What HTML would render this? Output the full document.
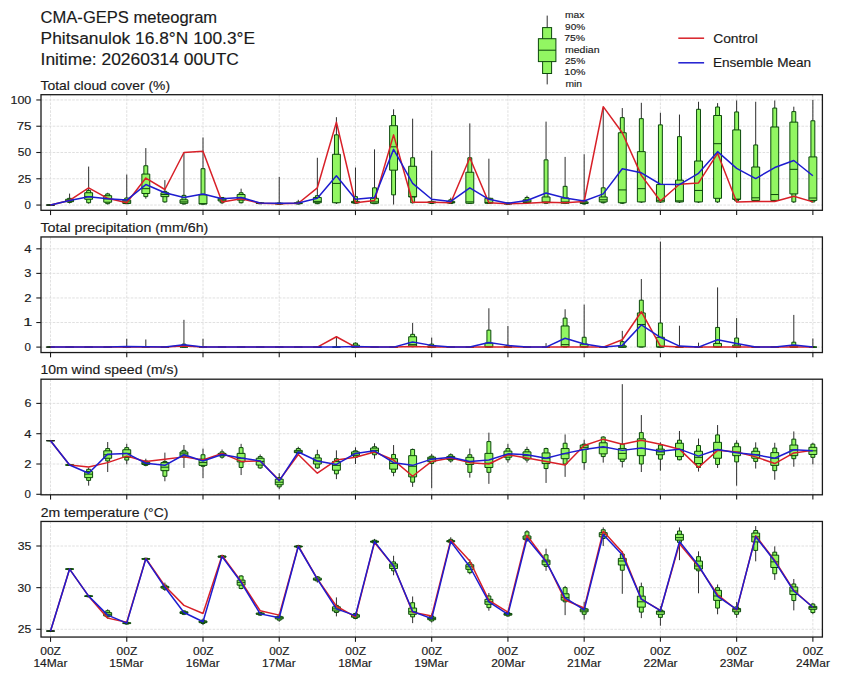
<!DOCTYPE html>
<html><head><meta charset="utf-8"><style>
html,body{margin:0;padding:0;background:#fff;width:841px;height:680px;overflow:hidden}
svg{display:block;font-family:"Liberation Sans", sans-serif;fill:#1a1a1a}
text{stroke:#1a1a1a;stroke-width:0.15px}
</style></head><body>
<svg width="841" height="680" viewBox="0 0 841 680">
<rect width="841" height="680" fill="#fff"/>
<text x="40.62" y="23.00" font-size="16.04" textLength="176.50" lengthAdjust="spacingAndGlyphs">CMA-GEPS meteogram</text>
<text x="40.61" y="43.70" font-size="16.04" textLength="214.43" lengthAdjust="spacingAndGlyphs">Phitsanulok 16.8°N 100.3°E</text>
<text x="40.56" y="64.60" font-size="16.04" textLength="198.34" lengthAdjust="spacingAndGlyphs">Initime: 20260314 00UTC</text>
<line x1="547.2" y1="15.6" x2="547.2" y2="84.4" stroke="#2e2e2e" stroke-width="1"/>
<rect x="542.6" y="27.6" width="9.0" height="45.9" fill="#92f662" stroke="#0c480c" stroke-width="1"/>
<rect x="538.4" y="38.7" width="17.5" height="22.9" fill="#92f662" stroke="#0c480c" stroke-width="1"/>
<line x1="538.4" y1="50.2" x2="555.9" y2="50.2" stroke="#0c480c" stroke-width="1"/>
<text x="565.08" y="18.30" font-size="9.45" textLength="19.38" lengthAdjust="spacingAndGlyphs">max</text>
<text x="565.13" y="29.71" font-size="9.45" textLength="20.08" lengthAdjust="spacingAndGlyphs">90%</text>
<text x="564.18" y="41.12" font-size="9.45" textLength="20.91" lengthAdjust="spacingAndGlyphs">75%</text>
<text x="564.98" y="52.53" font-size="9.45" textLength="34.52" lengthAdjust="spacingAndGlyphs">median</text>
<text x="564.98" y="63.94" font-size="9.45" textLength="20.27" lengthAdjust="spacingAndGlyphs">25%</text>
<text x="564.27" y="75.35" font-size="9.45" textLength="21.21" lengthAdjust="spacingAndGlyphs">10%</text>
<text x="565.45" y="86.76" font-size="9.45" textLength="16.58" lengthAdjust="spacingAndGlyphs">min</text>
<line x1="678.3" y1="38.2" x2="704.1" y2="38.2" stroke="#d82028" stroke-width="1.5"/>
<line x1="678.3" y1="62.8" x2="704.1" y2="62.8" stroke="#1e1cd0" stroke-width="1.5"/>
<text x="713.17" y="42.60" font-size="12.81" textLength="44.67" lengthAdjust="spacingAndGlyphs">Control</text>
<text x="712.93" y="66.90" font-size="12.81" textLength="98.22" lengthAdjust="spacingAndGlyphs">Ensemble Mean</text>
<text x="40.49" y="89.80" font-size="12.81" textLength="129.56" lengthAdjust="spacingAndGlyphs">Total cloud cover (%)</text>
<line x1="50.53" y1="94.70" x2="50.53" y2="210.30" stroke="#d8d8d8" stroke-width="0.8" stroke-dasharray="2.6,1.3"/>
<line x1="126.76" y1="94.70" x2="126.76" y2="210.30" stroke="#d8d8d8" stroke-width="0.8" stroke-dasharray="2.6,1.3"/>
<line x1="203.00" y1="94.70" x2="203.00" y2="210.30" stroke="#d8d8d8" stroke-width="0.8" stroke-dasharray="2.6,1.3"/>
<line x1="279.23" y1="94.70" x2="279.23" y2="210.30" stroke="#d8d8d8" stroke-width="0.8" stroke-dasharray="2.6,1.3"/>
<line x1="355.47" y1="94.70" x2="355.47" y2="210.30" stroke="#d8d8d8" stroke-width="0.8" stroke-dasharray="2.6,1.3"/>
<line x1="431.70" y1="94.70" x2="431.70" y2="210.30" stroke="#d8d8d8" stroke-width="0.8" stroke-dasharray="2.6,1.3"/>
<line x1="507.93" y1="94.70" x2="507.93" y2="210.30" stroke="#d8d8d8" stroke-width="0.8" stroke-dasharray="2.6,1.3"/>
<line x1="584.17" y1="94.70" x2="584.17" y2="210.30" stroke="#d8d8d8" stroke-width="0.8" stroke-dasharray="2.6,1.3"/>
<line x1="660.40" y1="94.70" x2="660.40" y2="210.30" stroke="#d8d8d8" stroke-width="0.8" stroke-dasharray="2.6,1.3"/>
<line x1="736.64" y1="94.70" x2="736.64" y2="210.30" stroke="#d8d8d8" stroke-width="0.8" stroke-dasharray="2.6,1.3"/>
<line x1="812.87" y1="94.70" x2="812.87" y2="210.30" stroke="#d8d8d8" stroke-width="0.8" stroke-dasharray="2.6,1.3"/>
<line x1="41.00" y1="205.05" x2="822.40" y2="205.05" stroke="#d8d8d8" stroke-width="0.8" stroke-dasharray="2.6,1.3"/>
<line x1="41.00" y1="178.78" x2="822.40" y2="178.78" stroke="#d8d8d8" stroke-width="0.8" stroke-dasharray="2.6,1.3"/>
<line x1="41.00" y1="152.50" x2="822.40" y2="152.50" stroke="#d8d8d8" stroke-width="0.8" stroke-dasharray="2.6,1.3"/>
<line x1="41.00" y1="126.23" x2="822.40" y2="126.23" stroke="#d8d8d8" stroke-width="0.8" stroke-dasharray="2.6,1.3"/>
<line x1="41.00" y1="99.96" x2="822.40" y2="99.96" stroke="#d8d8d8" stroke-width="0.8" stroke-dasharray="2.6,1.3"/>
<line x1="50.53" y1="205.05" x2="50.53" y2="205.05" stroke="#2e2e2e" stroke-width="1"/>
<path d="M48.58 205.05H52.48V205.05H48.58Z" fill="#92f662" stroke="#0c480c" stroke-width="1.0"/>
<path d="M46.58 205.05H54.48V205.05H46.58Z" fill="#92f662" stroke="#0c480c" stroke-width="1.0"/>
<line x1="46.58" y1="205.05" x2="54.48" y2="205.05" stroke="#0c480c" stroke-width="1.0"/>
<line x1="46.28" y1="205.05" x2="54.78" y2="205.05" stroke="#222" stroke-width="1.1"/>
<line x1="69.59" y1="193.60" x2="69.59" y2="203.47" stroke="#2e2e2e" stroke-width="1"/>
<path d="M67.64 198.32H71.54V202.42H67.64Z" fill="#92f662" stroke="#0c480c" stroke-width="1.0"/>
<path d="M65.64 199.27H73.54V201.69H65.64Z" fill="#92f662" stroke="#0c480c" stroke-width="1.0"/>
<line x1="65.64" y1="200.85" x2="73.54" y2="200.85" stroke="#0c480c" stroke-width="1.0"/>
<line x1="88.65" y1="166.59" x2="88.65" y2="203.68" stroke="#2e2e2e" stroke-width="1"/>
<path d="M86.70 190.44H90.60V202.74H86.70Z" fill="#92f662" stroke="#0c480c" stroke-width="1.0"/>
<path d="M84.70 192.75H92.60V199.27H84.70Z" fill="#92f662" stroke="#0c480c" stroke-width="1.0"/>
<line x1="84.70" y1="196.64" x2="92.60" y2="196.64" stroke="#0c480c" stroke-width="1.0"/>
<line x1="107.70" y1="192.75" x2="107.70" y2="204.52" stroke="#2e2e2e" stroke-width="1"/>
<path d="M105.75 193.91H109.65V203.68H105.75Z" fill="#92f662" stroke="#0c480c" stroke-width="1.0"/>
<path d="M103.75 195.70H111.65V202.21H103.75Z" fill="#92f662" stroke="#0c480c" stroke-width="1.0"/>
<line x1="103.75" y1="198.85" x2="111.65" y2="198.85" stroke="#0c480c" stroke-width="1.0"/>
<line x1="126.76" y1="174.57" x2="126.76" y2="204.00" stroke="#2e2e2e" stroke-width="1"/>
<path d="M124.81 198.01H128.71V203.68H124.81Z" fill="#92f662" stroke="#0c480c" stroke-width="1.0"/>
<path d="M122.81 200.11H130.71V203.47H122.81Z" fill="#92f662" stroke="#0c480c" stroke-width="1.0"/>
<line x1="122.81" y1="201.90" x2="130.71" y2="201.90" stroke="#0c480c" stroke-width="1.0"/>
<line x1="145.82" y1="148.09" x2="145.82" y2="198.74" stroke="#2e2e2e" stroke-width="1"/>
<path d="M143.87 165.75H147.77V196.64H143.87Z" fill="#92f662" stroke="#0c480c" stroke-width="1.0"/>
<path d="M141.87 174.05H149.77V193.49H141.87Z" fill="#92f662" stroke="#0c480c" stroke-width="1.0"/>
<line x1="141.87" y1="188.66" x2="149.77" y2="188.66" stroke="#0c480c" stroke-width="1.0"/>
<line x1="164.88" y1="180.14" x2="164.88" y2="202.74" stroke="#2e2e2e" stroke-width="1"/>
<path d="M162.93 191.39H166.83V201.90H162.93Z" fill="#92f662" stroke="#0c480c" stroke-width="1.0"/>
<path d="M160.93 192.75H168.83V196.64H160.93Z" fill="#92f662" stroke="#0c480c" stroke-width="1.0"/>
<line x1="160.93" y1="194.54" x2="168.83" y2="194.54" stroke="#0c480c" stroke-width="1.0"/>
<line x1="183.94" y1="152.50" x2="183.94" y2="204.52" stroke="#2e2e2e" stroke-width="1"/>
<path d="M181.99 195.38H185.89V204.00H181.99Z" fill="#92f662" stroke="#0c480c" stroke-width="1.0"/>
<path d="M179.99 199.80H187.89V203.26H179.99Z" fill="#92f662" stroke="#0c480c" stroke-width="1.0"/>
<line x1="179.99" y1="201.90" x2="187.89" y2="201.90" stroke="#0c480c" stroke-width="1.0"/>
<line x1="203.00" y1="137.48" x2="203.00" y2="204.52" stroke="#2e2e2e" stroke-width="1"/>
<path d="M201.05 168.69H204.95V204.00H201.05Z" fill="#92f662" stroke="#0c480c" stroke-width="1.0"/>
<path d="M199.05 194.86H206.95V204.00H199.05Z" fill="#92f662" stroke="#0c480c" stroke-width="1.0"/>
<line x1="199.05" y1="203.68" x2="206.95" y2="203.68" stroke="#0c480c" stroke-width="1.0"/>
<line x1="222.06" y1="197.17" x2="222.06" y2="204.00" stroke="#2e2e2e" stroke-width="1"/>
<path d="M220.11 197.48H224.01V202.74H220.11Z" fill="#92f662" stroke="#0c480c" stroke-width="1.0"/>
<path d="M218.11 198.32H226.01V200.95H218.11Z" fill="#92f662" stroke="#0c480c" stroke-width="1.0"/>
<line x1="218.11" y1="199.80" x2="226.01" y2="199.80" stroke="#0c480c" stroke-width="1.0"/>
<line x1="241.11" y1="188.66" x2="241.11" y2="203.47" stroke="#2e2e2e" stroke-width="1"/>
<path d="M239.16 192.75H243.06V202.74H239.16Z" fill="#92f662" stroke="#0c480c" stroke-width="1.0"/>
<path d="M237.16 194.54H245.06V200.11H237.16Z" fill="#92f662" stroke="#0c480c" stroke-width="1.0"/>
<line x1="237.16" y1="198.01" x2="245.06" y2="198.01" stroke="#0c480c" stroke-width="1.0"/>
<line x1="260.17" y1="202.32" x2="260.17" y2="204.00" stroke="#2e2e2e" stroke-width="1"/>
<path d="M258.22 202.63H262.12V203.79H258.22Z" fill="#92f662" stroke="#0c480c" stroke-width="1.0"/>
<path d="M256.22 202.95H264.12V203.47H256.22Z" fill="#92f662" stroke="#0c480c" stroke-width="1.0"/>
<line x1="256.22" y1="203.26" x2="264.12" y2="203.26" stroke="#0c480c" stroke-width="1.0"/>
<line x1="279.23" y1="176.89" x2="279.23" y2="204.52" stroke="#2e2e2e" stroke-width="1"/>
<path d="M277.28 202.95H281.18V204.21H277.28Z" fill="#92f662" stroke="#0c480c" stroke-width="1.0"/>
<path d="M275.28 203.26H283.18V204.00H275.28Z" fill="#92f662" stroke="#0c480c" stroke-width="1.0"/>
<line x1="275.28" y1="203.68" x2="283.18" y2="203.68" stroke="#0c480c" stroke-width="1.0"/>
<line x1="298.29" y1="199.80" x2="298.29" y2="204.52" stroke="#2e2e2e" stroke-width="1"/>
<path d="M296.34 201.90H300.24V204.00H296.34Z" fill="#92f662" stroke="#0c480c" stroke-width="1.0"/>
<path d="M294.34 202.74H302.24V203.68H294.34Z" fill="#92f662" stroke="#0c480c" stroke-width="1.0"/>
<line x1="294.34" y1="203.26" x2="302.24" y2="203.26" stroke="#0c480c" stroke-width="1.0"/>
<line x1="317.35" y1="157.76" x2="317.35" y2="204.21" stroke="#2e2e2e" stroke-width="1"/>
<path d="M315.40 195.70H319.30V203.68H315.40Z" fill="#92f662" stroke="#0c480c" stroke-width="1.0"/>
<path d="M313.40 197.48H321.30V202.74H313.40Z" fill="#92f662" stroke="#0c480c" stroke-width="1.0"/>
<line x1="313.40" y1="201.37" x2="321.30" y2="201.37" stroke="#0c480c" stroke-width="1.0"/>
<line x1="336.41" y1="117.19" x2="336.41" y2="204.00" stroke="#2e2e2e" stroke-width="1"/>
<path d="M334.46 134.85H338.36V202.74H334.46Z" fill="#92f662" stroke="#0c480c" stroke-width="1.0"/>
<path d="M332.46 154.29H340.36V202.74H332.46Z" fill="#92f662" stroke="#0c480c" stroke-width="1.0"/>
<line x1="332.46" y1="183.40" x2="340.36" y2="183.40" stroke="#0c480c" stroke-width="1.0"/>
<line x1="355.47" y1="167.53" x2="355.47" y2="204.00" stroke="#2e2e2e" stroke-width="1"/>
<path d="M353.52 196.64H357.42V203.26H353.52Z" fill="#92f662" stroke="#0c480c" stroke-width="1.0"/>
<path d="M351.52 201.37H359.42V202.95H351.52Z" fill="#92f662" stroke="#0c480c" stroke-width="1.0"/>
<line x1="351.52" y1="202.42" x2="359.42" y2="202.42" stroke="#0c480c" stroke-width="1.0"/>
<line x1="374.52" y1="149.35" x2="374.52" y2="204.00" stroke="#2e2e2e" stroke-width="1"/>
<path d="M372.57 187.82H376.47V203.68H372.57Z" fill="#92f662" stroke="#0c480c" stroke-width="1.0"/>
<path d="M370.57 198.32H378.47V203.26H370.57Z" fill="#92f662" stroke="#0c480c" stroke-width="1.0"/>
<line x1="370.57" y1="201.90" x2="378.47" y2="201.90" stroke="#0c480c" stroke-width="1.0"/>
<line x1="393.58" y1="109.31" x2="393.58" y2="204.52" stroke="#2e2e2e" stroke-width="1"/>
<path d="M391.63 115.51H395.53V194.86H391.63Z" fill="#92f662" stroke="#0c480c" stroke-width="1.0"/>
<path d="M389.63 125.71H397.53V170.16H389.63Z" fill="#92f662" stroke="#0c480c" stroke-width="1.0"/>
<line x1="389.63" y1="146.83" x2="397.53" y2="146.83" stroke="#0c480c" stroke-width="1.0"/>
<line x1="412.64" y1="118.67" x2="412.64" y2="203.47" stroke="#2e2e2e" stroke-width="1"/>
<path d="M410.69 157.76H414.59V202.74H410.69Z" fill="#92f662" stroke="#0c480c" stroke-width="1.0"/>
<path d="M408.69 166.27H416.59V196.96H408.69Z" fill="#92f662" stroke="#0c480c" stroke-width="1.0"/>
<line x1="408.69" y1="196.64" x2="416.59" y2="196.64" stroke="#0c480c" stroke-width="1.0"/>
<line x1="431.70" y1="150.72" x2="431.70" y2="204.00" stroke="#2e2e2e" stroke-width="1"/>
<path d="M429.75 201.37H433.65V203.47H429.75Z" fill="#92f662" stroke="#0c480c" stroke-width="1.0"/>
<path d="M427.75 201.90H435.65V202.95H427.75Z" fill="#92f662" stroke="#0c480c" stroke-width="1.0"/>
<line x1="427.75" y1="202.42" x2="435.65" y2="202.42" stroke="#0c480c" stroke-width="1.0"/>
<line x1="450.76" y1="197.69" x2="450.76" y2="204.00" stroke="#2e2e2e" stroke-width="1"/>
<path d="M448.81 199.80H452.71V203.47H448.81Z" fill="#92f662" stroke="#0c480c" stroke-width="1.0"/>
<path d="M446.81 201.37H454.71V202.95H446.81Z" fill="#92f662" stroke="#0c480c" stroke-width="1.0"/>
<line x1="446.81" y1="202.42" x2="454.71" y2="202.42" stroke="#0c480c" stroke-width="1.0"/>
<line x1="469.82" y1="123.39" x2="469.82" y2="204.00" stroke="#2e2e2e" stroke-width="1"/>
<path d="M467.87 157.76H471.77V203.26H467.87Z" fill="#92f662" stroke="#0c480c" stroke-width="1.0"/>
<path d="M465.87 172.26H473.77V203.26H465.87Z" fill="#92f662" stroke="#0c480c" stroke-width="1.0"/>
<line x1="465.87" y1="201.90" x2="473.77" y2="201.90" stroke="#0c480c" stroke-width="1.0"/>
<line x1="488.88" y1="158.70" x2="488.88" y2="204.00" stroke="#2e2e2e" stroke-width="1"/>
<path d="M486.93 198.32H490.83V203.47H486.93Z" fill="#92f662" stroke="#0c480c" stroke-width="1.0"/>
<path d="M484.93 198.32H492.83V203.26H484.93Z" fill="#92f662" stroke="#0c480c" stroke-width="1.0"/>
<line x1="484.93" y1="202.42" x2="492.83" y2="202.42" stroke="#0c480c" stroke-width="1.0"/>
<line x1="507.93" y1="202.42" x2="507.93" y2="204.52" stroke="#2e2e2e" stroke-width="1"/>
<path d="M505.98 202.95H509.88V204.21H505.98Z" fill="#92f662" stroke="#0c480c" stroke-width="1.0"/>
<path d="M503.98 203.26H511.88V204.00H503.98Z" fill="#92f662" stroke="#0c480c" stroke-width="1.0"/>
<line x1="503.98" y1="203.68" x2="511.88" y2="203.68" stroke="#0c480c" stroke-width="1.0"/>
<line x1="526.99" y1="195.70" x2="526.99" y2="204.00" stroke="#2e2e2e" stroke-width="1"/>
<path d="M525.04 197.48H528.94V202.74H525.04Z" fill="#92f662" stroke="#0c480c" stroke-width="1.0"/>
<path d="M523.04 199.80H530.94V202.42H523.04Z" fill="#92f662" stroke="#0c480c" stroke-width="1.0"/>
<line x1="523.04" y1="201.90" x2="530.94" y2="201.90" stroke="#0c480c" stroke-width="1.0"/>
<line x1="546.05" y1="121.61" x2="546.05" y2="203.79" stroke="#2e2e2e" stroke-width="1"/>
<path d="M544.10 159.86H548.00V203.26H544.10Z" fill="#92f662" stroke="#0c480c" stroke-width="1.0"/>
<path d="M542.10 196.96H550.00V202.74H542.10Z" fill="#92f662" stroke="#0c480c" stroke-width="1.0"/>
<line x1="542.10" y1="201.90" x2="550.00" y2="201.90" stroke="#0c480c" stroke-width="1.0"/>
<line x1="565.11" y1="156.92" x2="565.11" y2="203.79" stroke="#2e2e2e" stroke-width="1"/>
<path d="M563.16 186.34H567.06V203.26H563.16Z" fill="#92f662" stroke="#0c480c" stroke-width="1.0"/>
<path d="M561.16 198.01H569.06V203.26H561.16Z" fill="#92f662" stroke="#0c480c" stroke-width="1.0"/>
<line x1="561.16" y1="201.90" x2="569.06" y2="201.90" stroke="#0c480c" stroke-width="1.0"/>
<line x1="584.17" y1="154.29" x2="584.17" y2="204.52" stroke="#2e2e2e" stroke-width="1"/>
<path d="M582.22 200.32H586.12V204.00H582.22Z" fill="#92f662" stroke="#0c480c" stroke-width="1.0"/>
<path d="M580.22 201.90H588.12V203.47H580.22Z" fill="#92f662" stroke="#0c480c" stroke-width="1.0"/>
<line x1="580.22" y1="202.95" x2="588.12" y2="202.95" stroke="#0c480c" stroke-width="1.0"/>
<line x1="603.23" y1="108.05" x2="603.23" y2="203.47" stroke="#2e2e2e" stroke-width="1"/>
<path d="M601.28 187.82H605.18V202.74H601.28Z" fill="#92f662" stroke="#0c480c" stroke-width="1.0"/>
<path d="M599.28 196.96H607.18V201.90H599.28Z" fill="#92f662" stroke="#0c480c" stroke-width="1.0"/>
<line x1="599.28" y1="199.80" x2="607.18" y2="199.80" stroke="#0c480c" stroke-width="1.0"/>
<line x1="622.29" y1="108.05" x2="622.29" y2="204.00" stroke="#2e2e2e" stroke-width="1"/>
<path d="M620.34 117.61H624.24V203.26H620.34Z" fill="#92f662" stroke="#0c480c" stroke-width="1.0"/>
<path d="M618.34 132.75H626.24V202.74H618.34Z" fill="#92f662" stroke="#0c480c" stroke-width="1.0"/>
<line x1="618.34" y1="189.92" x2="626.24" y2="189.92" stroke="#0c480c" stroke-width="1.0"/>
<line x1="641.34" y1="102.80" x2="641.34" y2="202.95" stroke="#2e2e2e" stroke-width="1"/>
<path d="M639.39 118.67H643.29V201.90H639.39Z" fill="#92f662" stroke="#0c480c" stroke-width="1.0"/>
<path d="M637.39 151.66H645.29V201.90H637.39Z" fill="#92f662" stroke="#0c480c" stroke-width="1.0"/>
<line x1="637.39" y1="188.66" x2="645.29" y2="188.66" stroke="#0c480c" stroke-width="1.0"/>
<line x1="660.40" y1="112.78" x2="660.40" y2="202.95" stroke="#2e2e2e" stroke-width="1"/>
<path d="M658.45 124.87H662.35V201.90H658.45Z" fill="#92f662" stroke="#0c480c" stroke-width="1.0"/>
<path d="M656.45 184.56H664.35V201.90H656.45Z" fill="#92f662" stroke="#0c480c" stroke-width="1.0"/>
<line x1="656.45" y1="200.32" x2="664.35" y2="200.32" stroke="#0c480c" stroke-width="1.0"/>
<line x1="679.46" y1="114.57" x2="679.46" y2="202.95" stroke="#2e2e2e" stroke-width="1"/>
<path d="M677.51 136.64H681.41V201.90H677.51Z" fill="#92f662" stroke="#0c480c" stroke-width="1.0"/>
<path d="M675.51 180.14H683.41V201.90H675.51Z" fill="#92f662" stroke="#0c480c" stroke-width="1.0"/>
<line x1="675.51" y1="200.85" x2="683.41" y2="200.85" stroke="#0c480c" stroke-width="1.0"/>
<line x1="698.52" y1="101.75" x2="698.52" y2="202.95" stroke="#2e2e2e" stroke-width="1"/>
<path d="M696.57 109.31H700.47V201.90H696.57Z" fill="#92f662" stroke="#0c480c" stroke-width="1.0"/>
<path d="M694.57 161.02H702.47V201.90H694.57Z" fill="#92f662" stroke="#0c480c" stroke-width="1.0"/>
<line x1="694.57" y1="190.44" x2="702.47" y2="190.44" stroke="#0c480c" stroke-width="1.0"/>
<line x1="717.58" y1="103.11" x2="717.58" y2="202.95" stroke="#2e2e2e" stroke-width="1"/>
<path d="M715.63 107.00H719.53V201.90H715.63Z" fill="#92f662" stroke="#0c480c" stroke-width="1.0"/>
<path d="M713.63 115.51H721.53V198.32H713.63Z" fill="#92f662" stroke="#0c480c" stroke-width="1.0"/>
<line x1="713.63" y1="143.68" x2="721.53" y2="143.68" stroke="#0c480c" stroke-width="1.0"/>
<line x1="736.64" y1="100.48" x2="736.64" y2="202.42" stroke="#2e2e2e" stroke-width="1"/>
<path d="M734.69 111.94H738.59V200.95H734.69Z" fill="#92f662" stroke="#0c480c" stroke-width="1.0"/>
<path d="M732.69 129.91H740.59V199.27H732.69Z" fill="#92f662" stroke="#0c480c" stroke-width="1.0"/>
<line x1="732.69" y1="199.27" x2="740.59" y2="199.27" stroke="#0c480c" stroke-width="1.0"/>
<line x1="755.70" y1="101.75" x2="755.70" y2="201.90" stroke="#2e2e2e" stroke-width="1"/>
<path d="M753.75 144.94H757.65V200.95H753.75Z" fill="#92f662" stroke="#0c480c" stroke-width="1.0"/>
<path d="M751.75 167.01H759.65V200.43H751.75Z" fill="#92f662" stroke="#0c480c" stroke-width="1.0"/>
<line x1="751.75" y1="197.80" x2="759.65" y2="197.80" stroke="#0c480c" stroke-width="1.0"/>
<line x1="774.75" y1="100.48" x2="774.75" y2="201.90" stroke="#2e2e2e" stroke-width="1"/>
<path d="M772.80 108.05H776.70V200.43H772.80Z" fill="#92f662" stroke="#0c480c" stroke-width="1.0"/>
<path d="M770.80 126.97H778.70V200.43H770.80Z" fill="#92f662" stroke="#0c480c" stroke-width="1.0"/>
<line x1="770.80" y1="194.54" x2="778.70" y2="194.54" stroke="#0c480c" stroke-width="1.0"/>
<line x1="793.81" y1="106.68" x2="793.81" y2="202.95" stroke="#2e2e2e" stroke-width="1"/>
<path d="M791.86 111.62H795.76V201.90H791.86Z" fill="#92f662" stroke="#0c480c" stroke-width="1.0"/>
<path d="M789.86 122.13H797.76V193.91H789.86Z" fill="#92f662" stroke="#0c480c" stroke-width="1.0"/>
<line x1="789.86" y1="169.32" x2="797.76" y2="169.32" stroke="#0c480c" stroke-width="1.0"/>
<line x1="812.87" y1="99.96" x2="812.87" y2="202.42" stroke="#2e2e2e" stroke-width="1"/>
<path d="M810.92 120.77H814.82V201.90H810.92Z" fill="#92f662" stroke="#0c480c" stroke-width="1.0"/>
<path d="M808.92 156.92H816.82V200.43H808.92Z" fill="#92f662" stroke="#0c480c" stroke-width="1.0"/>
<line x1="808.92" y1="198.01" x2="816.82" y2="198.01" stroke="#0c480c" stroke-width="1.0"/>
<polyline points="50.53,205.05 69.59,200.43 88.65,187.82 107.70,198.32 126.76,202.74 145.82,178.04 164.88,189.50 183.94,152.50 203.00,151.24 222.06,201.90 241.11,198.85 260.17,203.26 279.23,203.68 298.29,203.26 317.35,187.82 336.41,122.13 355.47,202.74 374.52,200.43 393.58,134.85 412.64,202.21 431.70,202.21 450.76,202.74 469.82,157.76 488.88,202.74 507.93,203.68 526.99,203.26 546.05,202.21 565.11,202.74 584.17,201.48 603.23,106.68 622.29,132.75 641.34,175.41 660.40,200.95 679.46,184.24 698.52,182.88 717.58,153.35 736.64,201.90 755.70,201.48 774.75,201.48 793.81,196.22 812.87,201.90" fill="none" stroke="#d82028" stroke-width="1.5" stroke-linejoin="round"/>
<polyline points="50.53,205.05 69.59,200.43 88.65,196.64 107.70,198.85 126.76,200.11 145.82,184.56 164.88,192.75 183.94,197.48 203.00,193.91 222.06,198.85 241.11,197.48 260.17,202.95 279.23,203.26 298.29,202.95 317.35,198.32 336.41,175.73 355.47,199.27 374.52,197.48 393.58,149.35 412.64,183.40 431.70,199.27 450.76,201.48 469.82,187.82 488.88,199.27 507.93,203.26 526.99,200.43 546.05,193.07 565.11,198.01 584.17,200.95 603.23,193.91 622.29,168.69 641.34,172.79 660.40,184.24 679.46,184.56 698.52,173.31 717.58,151.66 736.64,168.37 755.70,178.57 774.75,167.53 793.81,160.49 812.87,175.73" fill="none" stroke="#1e1cd0" stroke-width="1.5" stroke-linejoin="round"/>
<rect x="41.00" y="94.70" width="781.40" height="115.60" fill="none" stroke="#1a1a1a" stroke-width="1.3"/>
<line x1="36.30" y1="205.05" x2="41.00" y2="205.05" stroke="#1a1a1a" stroke-width="1.1"/>
<text x="24.58" y="208.95" font-size="10.82" textLength="6.42" lengthAdjust="spacingAndGlyphs">0</text>
<line x1="36.30" y1="178.78" x2="41.00" y2="178.78" stroke="#1a1a1a" stroke-width="1.1"/>
<text x="17.67" y="182.68" font-size="10.82" textLength="13.55" lengthAdjust="spacingAndGlyphs">25</text>
<line x1="36.30" y1="152.50" x2="41.00" y2="152.50" stroke="#1a1a1a" stroke-width="1.1"/>
<text x="17.76" y="156.40" font-size="10.82" textLength="13.31" lengthAdjust="spacingAndGlyphs">50</text>
<line x1="36.30" y1="126.23" x2="41.00" y2="126.23" stroke="#1a1a1a" stroke-width="1.1"/>
<text x="16.71" y="130.13" font-size="10.82" textLength="14.79" lengthAdjust="spacingAndGlyphs">75</text>
<line x1="36.30" y1="99.96" x2="41.00" y2="99.96" stroke="#1a1a1a" stroke-width="1.1"/>
<text x="10.51" y="103.86" font-size="10.82" textLength="20.77" lengthAdjust="spacingAndGlyphs">100</text>
<line x1="50.53" y1="210.30" x2="50.53" y2="215.10" stroke="#1a1a1a" stroke-width="1.1"/>
<line x1="126.76" y1="210.30" x2="126.76" y2="215.10" stroke="#1a1a1a" stroke-width="1.1"/>
<line x1="203.00" y1="210.30" x2="203.00" y2="215.10" stroke="#1a1a1a" stroke-width="1.1"/>
<line x1="279.23" y1="210.30" x2="279.23" y2="215.10" stroke="#1a1a1a" stroke-width="1.1"/>
<line x1="355.47" y1="210.30" x2="355.47" y2="215.10" stroke="#1a1a1a" stroke-width="1.1"/>
<line x1="431.70" y1="210.30" x2="431.70" y2="215.10" stroke="#1a1a1a" stroke-width="1.1"/>
<line x1="507.93" y1="210.30" x2="507.93" y2="215.10" stroke="#1a1a1a" stroke-width="1.1"/>
<line x1="584.17" y1="210.30" x2="584.17" y2="215.10" stroke="#1a1a1a" stroke-width="1.1"/>
<line x1="660.40" y1="210.30" x2="660.40" y2="215.10" stroke="#1a1a1a" stroke-width="1.1"/>
<line x1="736.64" y1="210.30" x2="736.64" y2="215.10" stroke="#1a1a1a" stroke-width="1.1"/>
<line x1="812.87" y1="210.30" x2="812.87" y2="215.10" stroke="#1a1a1a" stroke-width="1.1"/>
<text x="40.47" y="232.07" font-size="12.81" textLength="167.84" lengthAdjust="spacingAndGlyphs">Total precipitation (mm/6h)</text>
<line x1="50.53" y1="236.95" x2="50.53" y2="352.55" stroke="#d8d8d8" stroke-width="0.8" stroke-dasharray="2.6,1.3"/>
<line x1="126.76" y1="236.95" x2="126.76" y2="352.55" stroke="#d8d8d8" stroke-width="0.8" stroke-dasharray="2.6,1.3"/>
<line x1="203.00" y1="236.95" x2="203.00" y2="352.55" stroke="#d8d8d8" stroke-width="0.8" stroke-dasharray="2.6,1.3"/>
<line x1="279.23" y1="236.95" x2="279.23" y2="352.55" stroke="#d8d8d8" stroke-width="0.8" stroke-dasharray="2.6,1.3"/>
<line x1="355.47" y1="236.95" x2="355.47" y2="352.55" stroke="#d8d8d8" stroke-width="0.8" stroke-dasharray="2.6,1.3"/>
<line x1="431.70" y1="236.95" x2="431.70" y2="352.55" stroke="#d8d8d8" stroke-width="0.8" stroke-dasharray="2.6,1.3"/>
<line x1="507.93" y1="236.95" x2="507.93" y2="352.55" stroke="#d8d8d8" stroke-width="0.8" stroke-dasharray="2.6,1.3"/>
<line x1="584.17" y1="236.95" x2="584.17" y2="352.55" stroke="#d8d8d8" stroke-width="0.8" stroke-dasharray="2.6,1.3"/>
<line x1="660.40" y1="236.95" x2="660.40" y2="352.55" stroke="#d8d8d8" stroke-width="0.8" stroke-dasharray="2.6,1.3"/>
<line x1="736.64" y1="236.95" x2="736.64" y2="352.55" stroke="#d8d8d8" stroke-width="0.8" stroke-dasharray="2.6,1.3"/>
<line x1="812.87" y1="236.95" x2="812.87" y2="352.55" stroke="#d8d8d8" stroke-width="0.8" stroke-dasharray="2.6,1.3"/>
<line x1="41.00" y1="347.10" x2="822.40" y2="347.10" stroke="#d8d8d8" stroke-width="0.8" stroke-dasharray="2.6,1.3"/>
<line x1="41.00" y1="322.53" x2="822.40" y2="322.53" stroke="#d8d8d8" stroke-width="0.8" stroke-dasharray="2.6,1.3"/>
<line x1="41.00" y1="297.96" x2="822.40" y2="297.96" stroke="#d8d8d8" stroke-width="0.8" stroke-dasharray="2.6,1.3"/>
<line x1="41.00" y1="273.39" x2="822.40" y2="273.39" stroke="#d8d8d8" stroke-width="0.8" stroke-dasharray="2.6,1.3"/>
<line x1="41.00" y1="248.82" x2="822.40" y2="248.82" stroke="#d8d8d8" stroke-width="0.8" stroke-dasharray="2.6,1.3"/>
<line x1="50.53" y1="347.10" x2="50.53" y2="347.10" stroke="#2e2e2e" stroke-width="1"/>
<path d="M48.58 347.10H52.48V347.10H48.58Z" fill="#92f662" stroke="#0c480c" stroke-width="1.0"/>
<path d="M46.58 347.10H54.48V347.10H46.58Z" fill="#92f662" stroke="#0c480c" stroke-width="1.0"/>
<line x1="46.58" y1="347.10" x2="54.48" y2="347.10" stroke="#0c480c" stroke-width="1.0"/>
<line x1="46.28" y1="347.10" x2="54.78" y2="347.10" stroke="#222" stroke-width="1.1"/>
<line x1="69.59" y1="347.10" x2="69.59" y2="347.10" stroke="#2e2e2e" stroke-width="1"/>
<path d="M67.64 347.10H71.54V347.10H67.64Z" fill="#92f662" stroke="#0c480c" stroke-width="1.0"/>
<path d="M65.64 347.10H73.54V347.10H65.64Z" fill="#92f662" stroke="#0c480c" stroke-width="1.0"/>
<line x1="65.64" y1="347.10" x2="73.54" y2="347.10" stroke="#0c480c" stroke-width="1.0"/>
<line x1="65.34" y1="347.10" x2="73.84" y2="347.10" stroke="#222" stroke-width="1.1"/>
<line x1="88.65" y1="347.10" x2="88.65" y2="347.10" stroke="#2e2e2e" stroke-width="1"/>
<path d="M86.70 347.10H90.60V347.10H86.70Z" fill="#92f662" stroke="#0c480c" stroke-width="1.0"/>
<path d="M84.70 347.10H92.60V347.10H84.70Z" fill="#92f662" stroke="#0c480c" stroke-width="1.0"/>
<line x1="84.70" y1="347.10" x2="92.60" y2="347.10" stroke="#0c480c" stroke-width="1.0"/>
<line x1="84.40" y1="347.10" x2="92.90" y2="347.10" stroke="#222" stroke-width="1.1"/>
<line x1="107.70" y1="347.10" x2="107.70" y2="347.10" stroke="#2e2e2e" stroke-width="1"/>
<path d="M105.75 347.10H109.65V347.10H105.75Z" fill="#92f662" stroke="#0c480c" stroke-width="1.0"/>
<path d="M103.75 347.10H111.65V347.10H103.75Z" fill="#92f662" stroke="#0c480c" stroke-width="1.0"/>
<line x1="103.75" y1="347.10" x2="111.65" y2="347.10" stroke="#0c480c" stroke-width="1.0"/>
<line x1="103.45" y1="347.10" x2="111.95" y2="347.10" stroke="#222" stroke-width="1.1"/>
<line x1="126.76" y1="338.75" x2="126.76" y2="347.10" stroke="#2e2e2e" stroke-width="1"/>
<path d="M124.81 347.10H128.71V347.10H124.81Z" fill="#92f662" stroke="#0c480c" stroke-width="1.0"/>
<path d="M122.81 347.10H130.71V347.10H122.81Z" fill="#92f662" stroke="#0c480c" stroke-width="1.0"/>
<line x1="122.81" y1="347.10" x2="130.71" y2="347.10" stroke="#0c480c" stroke-width="1.0"/>
<line x1="145.82" y1="339.48" x2="145.82" y2="347.10" stroke="#2e2e2e" stroke-width="1"/>
<path d="M143.87 347.10H147.77V347.10H143.87Z" fill="#92f662" stroke="#0c480c" stroke-width="1.0"/>
<path d="M141.87 347.10H149.77V347.10H141.87Z" fill="#92f662" stroke="#0c480c" stroke-width="1.0"/>
<line x1="141.87" y1="347.10" x2="149.77" y2="347.10" stroke="#0c480c" stroke-width="1.0"/>
<line x1="164.88" y1="347.10" x2="164.88" y2="347.10" stroke="#2e2e2e" stroke-width="1"/>
<path d="M162.93 347.10H166.83V347.10H162.93Z" fill="#92f662" stroke="#0c480c" stroke-width="1.0"/>
<path d="M160.93 347.10H168.83V347.10H160.93Z" fill="#92f662" stroke="#0c480c" stroke-width="1.0"/>
<line x1="160.93" y1="347.10" x2="168.83" y2="347.10" stroke="#0c480c" stroke-width="1.0"/>
<line x1="160.63" y1="347.10" x2="169.13" y2="347.10" stroke="#222" stroke-width="1.1"/>
<line x1="183.94" y1="319.83" x2="183.94" y2="347.10" stroke="#2e2e2e" stroke-width="1"/>
<path d="M181.99 344.15H185.89V347.10H181.99Z" fill="#92f662" stroke="#0c480c" stroke-width="1.0"/>
<path d="M179.99 345.87H187.89V347.10H179.99Z" fill="#92f662" stroke="#0c480c" stroke-width="1.0"/>
<line x1="179.99" y1="347.10" x2="187.89" y2="347.10" stroke="#0c480c" stroke-width="1.0"/>
<line x1="203.00" y1="338.75" x2="203.00" y2="347.10" stroke="#2e2e2e" stroke-width="1"/>
<path d="M201.05 347.10H204.95V347.10H201.05Z" fill="#92f662" stroke="#0c480c" stroke-width="1.0"/>
<path d="M199.05 347.10H206.95V347.10H199.05Z" fill="#92f662" stroke="#0c480c" stroke-width="1.0"/>
<line x1="199.05" y1="347.10" x2="206.95" y2="347.10" stroke="#0c480c" stroke-width="1.0"/>
<line x1="222.06" y1="347.10" x2="222.06" y2="347.10" stroke="#2e2e2e" stroke-width="1"/>
<path d="M220.11 347.10H224.01V347.10H220.11Z" fill="#92f662" stroke="#0c480c" stroke-width="1.0"/>
<path d="M218.11 347.10H226.01V347.10H218.11Z" fill="#92f662" stroke="#0c480c" stroke-width="1.0"/>
<line x1="218.11" y1="347.10" x2="226.01" y2="347.10" stroke="#0c480c" stroke-width="1.0"/>
<line x1="217.81" y1="347.10" x2="226.31" y2="347.10" stroke="#222" stroke-width="1.1"/>
<line x1="241.11" y1="347.10" x2="241.11" y2="347.10" stroke="#2e2e2e" stroke-width="1"/>
<path d="M239.16 347.10H243.06V347.10H239.16Z" fill="#92f662" stroke="#0c480c" stroke-width="1.0"/>
<path d="M237.16 347.10H245.06V347.10H237.16Z" fill="#92f662" stroke="#0c480c" stroke-width="1.0"/>
<line x1="237.16" y1="347.10" x2="245.06" y2="347.10" stroke="#0c480c" stroke-width="1.0"/>
<line x1="236.86" y1="347.10" x2="245.36" y2="347.10" stroke="#222" stroke-width="1.1"/>
<line x1="260.17" y1="347.10" x2="260.17" y2="347.10" stroke="#2e2e2e" stroke-width="1"/>
<path d="M258.22 347.10H262.12V347.10H258.22Z" fill="#92f662" stroke="#0c480c" stroke-width="1.0"/>
<path d="M256.22 347.10H264.12V347.10H256.22Z" fill="#92f662" stroke="#0c480c" stroke-width="1.0"/>
<line x1="256.22" y1="347.10" x2="264.12" y2="347.10" stroke="#0c480c" stroke-width="1.0"/>
<line x1="255.92" y1="347.10" x2="264.42" y2="347.10" stroke="#222" stroke-width="1.1"/>
<line x1="279.23" y1="347.10" x2="279.23" y2="347.10" stroke="#2e2e2e" stroke-width="1"/>
<path d="M277.28 347.10H281.18V347.10H277.28Z" fill="#92f662" stroke="#0c480c" stroke-width="1.0"/>
<path d="M275.28 347.10H283.18V347.10H275.28Z" fill="#92f662" stroke="#0c480c" stroke-width="1.0"/>
<line x1="275.28" y1="347.10" x2="283.18" y2="347.10" stroke="#0c480c" stroke-width="1.0"/>
<line x1="274.98" y1="347.10" x2="283.48" y2="347.10" stroke="#222" stroke-width="1.1"/>
<line x1="298.29" y1="347.10" x2="298.29" y2="347.10" stroke="#2e2e2e" stroke-width="1"/>
<path d="M296.34 347.10H300.24V347.10H296.34Z" fill="#92f662" stroke="#0c480c" stroke-width="1.0"/>
<path d="M294.34 347.10H302.24V347.10H294.34Z" fill="#92f662" stroke="#0c480c" stroke-width="1.0"/>
<line x1="294.34" y1="347.10" x2="302.24" y2="347.10" stroke="#0c480c" stroke-width="1.0"/>
<line x1="294.04" y1="347.10" x2="302.54" y2="347.10" stroke="#222" stroke-width="1.1"/>
<line x1="317.35" y1="347.10" x2="317.35" y2="347.10" stroke="#2e2e2e" stroke-width="1"/>
<path d="M315.40 347.10H319.30V347.10H315.40Z" fill="#92f662" stroke="#0c480c" stroke-width="1.0"/>
<path d="M313.40 347.10H321.30V347.10H313.40Z" fill="#92f662" stroke="#0c480c" stroke-width="1.0"/>
<line x1="313.40" y1="347.10" x2="321.30" y2="347.10" stroke="#0c480c" stroke-width="1.0"/>
<line x1="313.10" y1="347.10" x2="321.60" y2="347.10" stroke="#222" stroke-width="1.1"/>
<line x1="336.41" y1="336.78" x2="336.41" y2="347.10" stroke="#2e2e2e" stroke-width="1"/>
<path d="M334.46 347.10H338.36V347.10H334.46Z" fill="#92f662" stroke="#0c480c" stroke-width="1.0"/>
<path d="M332.46 347.10H340.36V347.10H332.46Z" fill="#92f662" stroke="#0c480c" stroke-width="1.0"/>
<line x1="332.46" y1="347.10" x2="340.36" y2="347.10" stroke="#0c480c" stroke-width="1.0"/>
<line x1="355.47" y1="342.43" x2="355.47" y2="347.10" stroke="#2e2e2e" stroke-width="1"/>
<path d="M353.52 343.17H357.42V347.10H353.52Z" fill="#92f662" stroke="#0c480c" stroke-width="1.0"/>
<path d="M351.52 345.13H359.42V347.10H351.52Z" fill="#92f662" stroke="#0c480c" stroke-width="1.0"/>
<line x1="351.52" y1="347.10" x2="359.42" y2="347.10" stroke="#0c480c" stroke-width="1.0"/>
<line x1="374.52" y1="347.10" x2="374.52" y2="347.10" stroke="#2e2e2e" stroke-width="1"/>
<path d="M372.57 347.10H376.47V347.10H372.57Z" fill="#92f662" stroke="#0c480c" stroke-width="1.0"/>
<path d="M370.57 347.10H378.47V347.10H370.57Z" fill="#92f662" stroke="#0c480c" stroke-width="1.0"/>
<line x1="370.57" y1="347.10" x2="378.47" y2="347.10" stroke="#0c480c" stroke-width="1.0"/>
<line x1="370.27" y1="347.10" x2="378.77" y2="347.10" stroke="#222" stroke-width="1.1"/>
<line x1="393.58" y1="347.10" x2="393.58" y2="347.10" stroke="#2e2e2e" stroke-width="1"/>
<path d="M391.63 347.10H395.53V347.10H391.63Z" fill="#92f662" stroke="#0c480c" stroke-width="1.0"/>
<path d="M389.63 347.10H397.53V347.10H389.63Z" fill="#92f662" stroke="#0c480c" stroke-width="1.0"/>
<line x1="389.63" y1="347.10" x2="397.53" y2="347.10" stroke="#0c480c" stroke-width="1.0"/>
<line x1="389.33" y1="347.10" x2="397.83" y2="347.10" stroke="#222" stroke-width="1.1"/>
<line x1="412.64" y1="323.02" x2="412.64" y2="347.10" stroke="#2e2e2e" stroke-width="1"/>
<path d="M410.69 334.32H414.59V346.61H410.69Z" fill="#92f662" stroke="#0c480c" stroke-width="1.0"/>
<path d="M408.69 336.78H416.59V346.12H408.69Z" fill="#92f662" stroke="#0c480c" stroke-width="1.0"/>
<line x1="408.69" y1="344.64" x2="416.59" y2="344.64" stroke="#0c480c" stroke-width="1.0"/>
<line x1="431.70" y1="337.52" x2="431.70" y2="347.10" stroke="#2e2e2e" stroke-width="1"/>
<path d="M429.75 344.15H433.65V347.10H429.75Z" fill="#92f662" stroke="#0c480c" stroke-width="1.0"/>
<path d="M427.75 345.87H435.65V347.10H427.75Z" fill="#92f662" stroke="#0c480c" stroke-width="1.0"/>
<line x1="427.75" y1="347.10" x2="435.65" y2="347.10" stroke="#0c480c" stroke-width="1.0"/>
<line x1="450.76" y1="347.10" x2="450.76" y2="347.10" stroke="#2e2e2e" stroke-width="1"/>
<path d="M448.81 347.10H452.71V347.10H448.81Z" fill="#92f662" stroke="#0c480c" stroke-width="1.0"/>
<path d="M446.81 347.10H454.71V347.10H446.81Z" fill="#92f662" stroke="#0c480c" stroke-width="1.0"/>
<line x1="446.81" y1="347.10" x2="454.71" y2="347.10" stroke="#0c480c" stroke-width="1.0"/>
<line x1="446.51" y1="347.10" x2="455.01" y2="347.10" stroke="#222" stroke-width="1.1"/>
<line x1="469.82" y1="347.10" x2="469.82" y2="347.10" stroke="#2e2e2e" stroke-width="1"/>
<path d="M467.87 347.10H471.77V347.10H467.87Z" fill="#92f662" stroke="#0c480c" stroke-width="1.0"/>
<path d="M465.87 347.10H473.77V347.10H465.87Z" fill="#92f662" stroke="#0c480c" stroke-width="1.0"/>
<line x1="465.87" y1="347.10" x2="473.77" y2="347.10" stroke="#0c480c" stroke-width="1.0"/>
<line x1="465.57" y1="347.10" x2="474.07" y2="347.10" stroke="#222" stroke-width="1.1"/>
<line x1="488.88" y1="308.28" x2="488.88" y2="347.10" stroke="#2e2e2e" stroke-width="1"/>
<path d="M486.93 330.15H490.83V347.10H486.93Z" fill="#92f662" stroke="#0c480c" stroke-width="1.0"/>
<path d="M484.93 343.17H492.83V347.10H484.93Z" fill="#92f662" stroke="#0c480c" stroke-width="1.0"/>
<line x1="484.93" y1="346.61" x2="492.83" y2="346.61" stroke="#0c480c" stroke-width="1.0"/>
<line x1="507.93" y1="325.97" x2="507.93" y2="347.10" stroke="#2e2e2e" stroke-width="1"/>
<path d="M505.98 345.38H509.88V347.10H505.98Z" fill="#92f662" stroke="#0c480c" stroke-width="1.0"/>
<path d="M503.98 346.36H511.88V347.10H503.98Z" fill="#92f662" stroke="#0c480c" stroke-width="1.0"/>
<line x1="503.98" y1="347.10" x2="511.88" y2="347.10" stroke="#0c480c" stroke-width="1.0"/>
<line x1="526.99" y1="347.10" x2="526.99" y2="347.10" stroke="#2e2e2e" stroke-width="1"/>
<path d="M525.04 347.10H528.94V347.10H525.04Z" fill="#92f662" stroke="#0c480c" stroke-width="1.0"/>
<path d="M523.04 347.10H530.94V347.10H523.04Z" fill="#92f662" stroke="#0c480c" stroke-width="1.0"/>
<line x1="523.04" y1="347.10" x2="530.94" y2="347.10" stroke="#0c480c" stroke-width="1.0"/>
<line x1="522.74" y1="347.10" x2="531.24" y2="347.10" stroke="#222" stroke-width="1.1"/>
<line x1="546.05" y1="343.17" x2="546.05" y2="347.10" stroke="#2e2e2e" stroke-width="1"/>
<path d="M544.10 347.10H548.00V347.10H544.10Z" fill="#92f662" stroke="#0c480c" stroke-width="1.0"/>
<path d="M542.10 347.10H550.00V347.10H542.10Z" fill="#92f662" stroke="#0c480c" stroke-width="1.0"/>
<line x1="542.10" y1="347.10" x2="550.00" y2="347.10" stroke="#0c480c" stroke-width="1.0"/>
<line x1="565.11" y1="309.26" x2="565.11" y2="347.10" stroke="#2e2e2e" stroke-width="1"/>
<path d="M563.16 318.11H567.06V347.10H563.16Z" fill="#92f662" stroke="#0c480c" stroke-width="1.0"/>
<path d="M561.16 325.97H569.06V346.61H561.16Z" fill="#92f662" stroke="#0c480c" stroke-width="1.0"/>
<line x1="561.16" y1="344.64" x2="569.06" y2="344.64" stroke="#0c480c" stroke-width="1.0"/>
<line x1="584.17" y1="304.59" x2="584.17" y2="347.10" stroke="#2e2e2e" stroke-width="1"/>
<path d="M582.22 337.27H586.12V347.10H582.22Z" fill="#92f662" stroke="#0c480c" stroke-width="1.0"/>
<path d="M580.22 344.15H588.12V346.61H580.22Z" fill="#92f662" stroke="#0c480c" stroke-width="1.0"/>
<line x1="580.22" y1="347.10" x2="588.12" y2="347.10" stroke="#0c480c" stroke-width="1.0"/>
<line x1="603.23" y1="347.10" x2="603.23" y2="347.10" stroke="#2e2e2e" stroke-width="1"/>
<path d="M601.28 347.10H605.18V347.10H601.28Z" fill="#92f662" stroke="#0c480c" stroke-width="1.0"/>
<path d="M599.28 347.10H607.18V347.10H599.28Z" fill="#92f662" stroke="#0c480c" stroke-width="1.0"/>
<line x1="599.28" y1="347.10" x2="607.18" y2="347.10" stroke="#0c480c" stroke-width="1.0"/>
<line x1="598.98" y1="347.10" x2="607.48" y2="347.10" stroke="#222" stroke-width="1.1"/>
<line x1="622.29" y1="330.88" x2="622.29" y2="347.10" stroke="#2e2e2e" stroke-width="1"/>
<path d="M620.34 341.69H624.24V347.10H620.34Z" fill="#92f662" stroke="#0c480c" stroke-width="1.0"/>
<path d="M618.34 345.87H626.24V347.10H618.34Z" fill="#92f662" stroke="#0c480c" stroke-width="1.0"/>
<line x1="618.34" y1="347.10" x2="626.24" y2="347.10" stroke="#0c480c" stroke-width="1.0"/>
<line x1="641.34" y1="279.04" x2="641.34" y2="347.10" stroke="#2e2e2e" stroke-width="1"/>
<path d="M639.39 300.17H643.29V347.10H639.39Z" fill="#92f662" stroke="#0c480c" stroke-width="1.0"/>
<path d="M637.39 312.95H645.29V346.85H637.39Z" fill="#92f662" stroke="#0c480c" stroke-width="1.0"/>
<line x1="637.39" y1="324.50" x2="645.29" y2="324.50" stroke="#0c480c" stroke-width="1.0"/>
<line x1="660.40" y1="241.69" x2="660.40" y2="347.10" stroke="#2e2e2e" stroke-width="1"/>
<path d="M658.45 323.02H662.35V347.10H658.45Z" fill="#92f662" stroke="#0c480c" stroke-width="1.0"/>
<path d="M656.45 337.27H664.35V346.85H656.45Z" fill="#92f662" stroke="#0c480c" stroke-width="1.0"/>
<line x1="656.45" y1="347.10" x2="664.35" y2="347.10" stroke="#0c480c" stroke-width="1.0"/>
<line x1="679.46" y1="325.72" x2="679.46" y2="347.10" stroke="#2e2e2e" stroke-width="1"/>
<path d="M677.51 347.10H681.41V347.10H677.51Z" fill="#92f662" stroke="#0c480c" stroke-width="1.0"/>
<path d="M675.51 347.10H683.41V347.10H675.51Z" fill="#92f662" stroke="#0c480c" stroke-width="1.0"/>
<line x1="675.51" y1="347.10" x2="683.41" y2="347.10" stroke="#0c480c" stroke-width="1.0"/>
<line x1="698.52" y1="342.68" x2="698.52" y2="347.10" stroke="#2e2e2e" stroke-width="1"/>
<path d="M696.57 347.10H700.47V347.10H696.57Z" fill="#92f662" stroke="#0c480c" stroke-width="1.0"/>
<path d="M694.57 347.10H702.47V347.10H694.57Z" fill="#92f662" stroke="#0c480c" stroke-width="1.0"/>
<line x1="694.57" y1="347.10" x2="702.47" y2="347.10" stroke="#0c480c" stroke-width="1.0"/>
<line x1="717.58" y1="287.39" x2="717.58" y2="347.10" stroke="#2e2e2e" stroke-width="1"/>
<path d="M715.63 327.44H719.53V347.10H715.63Z" fill="#92f662" stroke="#0c480c" stroke-width="1.0"/>
<path d="M713.63 343.41H721.53V347.10H713.63Z" fill="#92f662" stroke="#0c480c" stroke-width="1.0"/>
<line x1="713.63" y1="346.61" x2="721.53" y2="346.61" stroke="#0c480c" stroke-width="1.0"/>
<line x1="736.64" y1="318.11" x2="736.64" y2="347.10" stroke="#2e2e2e" stroke-width="1"/>
<path d="M734.69 338.01H738.59V347.10H734.69Z" fill="#92f662" stroke="#0c480c" stroke-width="1.0"/>
<path d="M732.69 345.13H740.59V347.10H732.69Z" fill="#92f662" stroke="#0c480c" stroke-width="1.0"/>
<line x1="732.69" y1="347.10" x2="740.59" y2="347.10" stroke="#0c480c" stroke-width="1.0"/>
<line x1="755.70" y1="347.10" x2="755.70" y2="347.10" stroke="#2e2e2e" stroke-width="1"/>
<path d="M753.75 347.10H757.65V347.10H753.75Z" fill="#92f662" stroke="#0c480c" stroke-width="1.0"/>
<path d="M751.75 347.10H759.65V347.10H751.75Z" fill="#92f662" stroke="#0c480c" stroke-width="1.0"/>
<line x1="751.75" y1="347.10" x2="759.65" y2="347.10" stroke="#0c480c" stroke-width="1.0"/>
<line x1="751.45" y1="347.10" x2="759.95" y2="347.10" stroke="#222" stroke-width="1.1"/>
<line x1="774.75" y1="347.10" x2="774.75" y2="347.10" stroke="#2e2e2e" stroke-width="1"/>
<path d="M772.80 347.10H776.70V347.10H772.80Z" fill="#92f662" stroke="#0c480c" stroke-width="1.0"/>
<path d="M770.80 347.10H778.70V347.10H770.80Z" fill="#92f662" stroke="#0c480c" stroke-width="1.0"/>
<line x1="770.80" y1="347.10" x2="778.70" y2="347.10" stroke="#0c480c" stroke-width="1.0"/>
<line x1="770.50" y1="347.10" x2="779.00" y2="347.10" stroke="#222" stroke-width="1.1"/>
<line x1="793.81" y1="314.91" x2="793.81" y2="347.10" stroke="#2e2e2e" stroke-width="1"/>
<path d="M791.86 342.19H795.76V347.10H791.86Z" fill="#92f662" stroke="#0c480c" stroke-width="1.0"/>
<path d="M789.86 345.87H797.76V347.10H789.86Z" fill="#92f662" stroke="#0c480c" stroke-width="1.0"/>
<line x1="789.86" y1="347.10" x2="797.76" y2="347.10" stroke="#0c480c" stroke-width="1.0"/>
<line x1="812.87" y1="338.50" x2="812.87" y2="347.10" stroke="#2e2e2e" stroke-width="1"/>
<path d="M810.92 347.10H814.82V347.10H810.92Z" fill="#92f662" stroke="#0c480c" stroke-width="1.0"/>
<path d="M808.92 347.10H816.82V347.10H808.92Z" fill="#92f662" stroke="#0c480c" stroke-width="1.0"/>
<line x1="808.92" y1="347.10" x2="816.82" y2="347.10" stroke="#0c480c" stroke-width="1.0"/>
<polyline points="50.53,347.10 69.59,347.10 88.65,347.10 107.70,347.10 126.76,347.10 145.82,347.10 164.88,347.10 183.94,346.12 203.00,347.10 222.06,347.10 241.11,347.10 260.17,347.10 279.23,347.10 298.29,347.10 317.35,347.10 336.41,336.78 355.47,347.10 374.52,347.10 393.58,347.10 412.64,346.61 431.70,347.10 450.76,347.10 469.82,347.10 488.88,347.10 507.93,347.10 526.99,347.10 546.05,347.10 565.11,347.10 584.17,347.10 603.23,347.10 622.29,339.73 641.34,311.72 660.40,346.12 679.46,347.10 698.52,347.10 717.58,347.10 736.64,347.10 755.70,347.10 774.75,347.10 793.81,347.10 812.87,347.10" fill="none" stroke="#d82028" stroke-width="1.5" stroke-linejoin="round"/>
<polyline points="50.53,347.10 69.59,347.10 88.65,347.10 107.70,347.10 126.76,346.61 145.82,346.85 164.88,347.10 183.94,344.64 203.00,347.10 222.06,347.10 241.11,347.10 260.17,347.10 279.23,347.10 298.29,347.10 317.35,347.10 336.41,347.10 355.47,346.61 374.52,347.10 393.58,347.10 412.64,341.94 431.70,345.38 450.76,347.10 469.82,347.10 488.88,342.43 507.93,345.38 526.99,347.10 546.05,347.10 565.11,338.25 584.17,343.91 603.23,347.10 622.29,345.38 641.34,324.99 660.40,337.27 679.46,346.12 698.52,347.10 717.58,339.73 736.64,343.41 755.70,347.10 774.75,347.10 793.81,344.89 812.87,347.10" fill="none" stroke="#1e1cd0" stroke-width="1.5" stroke-linejoin="round"/>
<rect x="41.00" y="236.95" width="781.40" height="115.60" fill="none" stroke="#1a1a1a" stroke-width="1.3"/>
<line x1="36.30" y1="347.10" x2="41.00" y2="347.10" stroke="#1a1a1a" stroke-width="1.1"/>
<text x="24.58" y="351.00" font-size="10.82" textLength="6.42" lengthAdjust="spacingAndGlyphs">0</text>
<line x1="36.30" y1="322.53" x2="41.00" y2="322.53" stroke="#1a1a1a" stroke-width="1.1"/>
<text x="23.21" y="326.43" font-size="10.82" textLength="9.08" lengthAdjust="spacingAndGlyphs">1</text>
<line x1="36.30" y1="297.96" x2="41.00" y2="297.96" stroke="#1a1a1a" stroke-width="1.1"/>
<text x="24.25" y="301.86" font-size="10.82" textLength="7.28" lengthAdjust="spacingAndGlyphs">2</text>
<line x1="36.30" y1="273.39" x2="41.00" y2="273.39" stroke="#1a1a1a" stroke-width="1.1"/>
<text x="24.22" y="277.29" font-size="10.82" textLength="7.16" lengthAdjust="spacingAndGlyphs">3</text>
<line x1="36.30" y1="248.82" x2="41.00" y2="248.82" stroke="#1a1a1a" stroke-width="1.1"/>
<text x="24.19" y="252.72" font-size="10.82" textLength="7.21" lengthAdjust="spacingAndGlyphs">4</text>
<line x1="50.53" y1="352.55" x2="50.53" y2="357.35" stroke="#1a1a1a" stroke-width="1.1"/>
<line x1="126.76" y1="352.55" x2="126.76" y2="357.35" stroke="#1a1a1a" stroke-width="1.1"/>
<line x1="203.00" y1="352.55" x2="203.00" y2="357.35" stroke="#1a1a1a" stroke-width="1.1"/>
<line x1="279.23" y1="352.55" x2="279.23" y2="357.35" stroke="#1a1a1a" stroke-width="1.1"/>
<line x1="355.47" y1="352.55" x2="355.47" y2="357.35" stroke="#1a1a1a" stroke-width="1.1"/>
<line x1="431.70" y1="352.55" x2="431.70" y2="357.35" stroke="#1a1a1a" stroke-width="1.1"/>
<line x1="507.93" y1="352.55" x2="507.93" y2="357.35" stroke="#1a1a1a" stroke-width="1.1"/>
<line x1="584.17" y1="352.55" x2="584.17" y2="357.35" stroke="#1a1a1a" stroke-width="1.1"/>
<line x1="660.40" y1="352.55" x2="660.40" y2="357.35" stroke="#1a1a1a" stroke-width="1.1"/>
<line x1="736.64" y1="352.55" x2="736.64" y2="357.35" stroke="#1a1a1a" stroke-width="1.1"/>
<line x1="812.87" y1="352.55" x2="812.87" y2="357.35" stroke="#1a1a1a" stroke-width="1.1"/>
<text x="40.53" y="374.34" font-size="12.81" textLength="137.65" lengthAdjust="spacingAndGlyphs">10m wind speed (m/s)</text>
<line x1="50.53" y1="379.20" x2="50.53" y2="494.80" stroke="#d8d8d8" stroke-width="0.8" stroke-dasharray="2.6,1.3"/>
<line x1="126.76" y1="379.20" x2="126.76" y2="494.80" stroke="#d8d8d8" stroke-width="0.8" stroke-dasharray="2.6,1.3"/>
<line x1="203.00" y1="379.20" x2="203.00" y2="494.80" stroke="#d8d8d8" stroke-width="0.8" stroke-dasharray="2.6,1.3"/>
<line x1="279.23" y1="379.20" x2="279.23" y2="494.80" stroke="#d8d8d8" stroke-width="0.8" stroke-dasharray="2.6,1.3"/>
<line x1="355.47" y1="379.20" x2="355.47" y2="494.80" stroke="#d8d8d8" stroke-width="0.8" stroke-dasharray="2.6,1.3"/>
<line x1="431.70" y1="379.20" x2="431.70" y2="494.80" stroke="#d8d8d8" stroke-width="0.8" stroke-dasharray="2.6,1.3"/>
<line x1="507.93" y1="379.20" x2="507.93" y2="494.80" stroke="#d8d8d8" stroke-width="0.8" stroke-dasharray="2.6,1.3"/>
<line x1="584.17" y1="379.20" x2="584.17" y2="494.80" stroke="#d8d8d8" stroke-width="0.8" stroke-dasharray="2.6,1.3"/>
<line x1="660.40" y1="379.20" x2="660.40" y2="494.80" stroke="#d8d8d8" stroke-width="0.8" stroke-dasharray="2.6,1.3"/>
<line x1="736.64" y1="379.20" x2="736.64" y2="494.80" stroke="#d8d8d8" stroke-width="0.8" stroke-dasharray="2.6,1.3"/>
<line x1="812.87" y1="379.20" x2="812.87" y2="494.80" stroke="#d8d8d8" stroke-width="0.8" stroke-dasharray="2.6,1.3"/>
<line x1="41.00" y1="494.30" x2="822.40" y2="494.30" stroke="#d8d8d8" stroke-width="0.8" stroke-dasharray="2.6,1.3"/>
<line x1="41.00" y1="464.00" x2="822.40" y2="464.00" stroke="#d8d8d8" stroke-width="0.8" stroke-dasharray="2.6,1.3"/>
<line x1="41.00" y1="433.70" x2="822.40" y2="433.70" stroke="#d8d8d8" stroke-width="0.8" stroke-dasharray="2.6,1.3"/>
<line x1="41.00" y1="403.40" x2="822.40" y2="403.40" stroke="#d8d8d8" stroke-width="0.8" stroke-dasharray="2.6,1.3"/>
<line x1="50.53" y1="440.67" x2="50.53" y2="440.67" stroke="#2e2e2e" stroke-width="1"/>
<path d="M48.58 440.67H52.48V440.67H48.58Z" fill="#92f662" stroke="#0c480c" stroke-width="1.0"/>
<path d="M46.58 440.67H54.48V440.67H46.58Z" fill="#92f662" stroke="#0c480c" stroke-width="1.0"/>
<line x1="46.58" y1="440.67" x2="54.48" y2="440.67" stroke="#0c480c" stroke-width="1.0"/>
<line x1="46.28" y1="440.67" x2="54.78" y2="440.67" stroke="#222" stroke-width="1.1"/>
<line x1="69.59" y1="464.00" x2="69.59" y2="465.82" stroke="#2e2e2e" stroke-width="1"/>
<path d="M67.64 464.45H71.54V465.51H67.64Z" fill="#92f662" stroke="#0c480c" stroke-width="1.0"/>
<path d="M65.64 464.76H73.54V465.21H65.64Z" fill="#92f662" stroke="#0c480c" stroke-width="1.0"/>
<line x1="65.64" y1="465.06" x2="73.54" y2="465.06" stroke="#0c480c" stroke-width="1.0"/>
<line x1="88.65" y1="467.48" x2="88.65" y2="485.66" stroke="#2e2e2e" stroke-width="1"/>
<path d="M86.70 469.30H90.60V480.36H86.70Z" fill="#92f662" stroke="#0c480c" stroke-width="1.0"/>
<path d="M84.70 471.57H92.60V477.63H84.70Z" fill="#92f662" stroke="#0c480c" stroke-width="1.0"/>
<line x1="84.70" y1="474.15" x2="92.60" y2="474.15" stroke="#0c480c" stroke-width="1.0"/>
<line x1="107.70" y1="442.03" x2="107.70" y2="472.03" stroke="#2e2e2e" stroke-width="1"/>
<path d="M105.75 448.55H109.65V460.97H105.75Z" fill="#92f662" stroke="#0c480c" stroke-width="1.0"/>
<path d="M103.75 450.82H111.65V458.24H103.75Z" fill="#92f662" stroke="#0c480c" stroke-width="1.0"/>
<line x1="103.75" y1="454.76" x2="111.65" y2="454.76" stroke="#0c480c" stroke-width="1.0"/>
<line x1="126.76" y1="443.85" x2="126.76" y2="464.45" stroke="#2e2e2e" stroke-width="1"/>
<path d="M124.81 447.64H128.71V460.06H124.81Z" fill="#92f662" stroke="#0c480c" stroke-width="1.0"/>
<path d="M122.81 449.76H130.71V457.33H122.81Z" fill="#92f662" stroke="#0c480c" stroke-width="1.0"/>
<line x1="122.81" y1="453.39" x2="130.71" y2="453.39" stroke="#0c480c" stroke-width="1.0"/>
<line x1="145.82" y1="458.70" x2="145.82" y2="466.27" stroke="#2e2e2e" stroke-width="1"/>
<path d="M143.87 460.97H147.77V465.36H143.87Z" fill="#92f662" stroke="#0c480c" stroke-width="1.0"/>
<path d="M141.87 462.18H149.77V464.45H141.87Z" fill="#92f662" stroke="#0c480c" stroke-width="1.0"/>
<line x1="141.87" y1="463.24" x2="149.77" y2="463.24" stroke="#0c480c" stroke-width="1.0"/>
<line x1="164.88" y1="452.64" x2="164.88" y2="481.27" stroke="#2e2e2e" stroke-width="1"/>
<path d="M162.93 461.42H166.83V476.27H162.93Z" fill="#92f662" stroke="#0c480c" stroke-width="1.0"/>
<path d="M160.93 462.64H168.83V470.67H160.93Z" fill="#92f662" stroke="#0c480c" stroke-width="1.0"/>
<line x1="160.93" y1="467.18" x2="168.83" y2="467.18" stroke="#0c480c" stroke-width="1.0"/>
<line x1="183.94" y1="445.06" x2="183.94" y2="467.94" stroke="#2e2e2e" stroke-width="1"/>
<path d="M181.99 450.37H185.89V457.33H181.99Z" fill="#92f662" stroke="#0c480c" stroke-width="1.0"/>
<path d="M179.99 452.03H187.89V456.12H179.99Z" fill="#92f662" stroke="#0c480c" stroke-width="1.0"/>
<line x1="179.99" y1="453.85" x2="187.89" y2="453.85" stroke="#0c480c" stroke-width="1.0"/>
<line x1="203.00" y1="448.55" x2="203.00" y2="478.09" stroke="#2e2e2e" stroke-width="1"/>
<path d="M201.05 454.76H204.95V466.27H201.05Z" fill="#92f662" stroke="#0c480c" stroke-width="1.0"/>
<path d="M199.05 459.15H206.95V465.36H199.05Z" fill="#92f662" stroke="#0c480c" stroke-width="1.0"/>
<line x1="199.05" y1="462.64" x2="206.95" y2="462.64" stroke="#0c480c" stroke-width="1.0"/>
<line x1="222.06" y1="449.46" x2="222.06" y2="458.70" stroke="#2e2e2e" stroke-width="1"/>
<path d="M220.11 451.88H224.01V457.18H220.11Z" fill="#92f662" stroke="#0c480c" stroke-width="1.0"/>
<path d="M218.11 453.39H226.01V455.67H218.11Z" fill="#92f662" stroke="#0c480c" stroke-width="1.0"/>
<line x1="218.11" y1="454.46" x2="226.01" y2="454.46" stroke="#0c480c" stroke-width="1.0"/>
<line x1="241.11" y1="443.85" x2="241.11" y2="475.06" stroke="#2e2e2e" stroke-width="1"/>
<path d="M239.16 447.64H243.06V467.48H239.16Z" fill="#92f662" stroke="#0c480c" stroke-width="1.0"/>
<path d="M237.16 453.39H245.06V461.88H237.16Z" fill="#92f662" stroke="#0c480c" stroke-width="1.0"/>
<line x1="237.16" y1="458.24" x2="245.06" y2="458.24" stroke="#0c480c" stroke-width="1.0"/>
<line x1="260.17" y1="454.46" x2="260.17" y2="468.85" stroke="#2e2e2e" stroke-width="1"/>
<path d="M258.22 456.58H262.12V467.94H258.22Z" fill="#92f662" stroke="#0c480c" stroke-width="1.0"/>
<path d="M256.22 458.24H264.12V465.06H256.22Z" fill="#92f662" stroke="#0c480c" stroke-width="1.0"/>
<line x1="256.22" y1="461.42" x2="264.12" y2="461.42" stroke="#0c480c" stroke-width="1.0"/>
<line x1="279.23" y1="473.24" x2="279.23" y2="489.15" stroke="#2e2e2e" stroke-width="1"/>
<path d="M277.28 477.63H281.18V486.88H277.28Z" fill="#92f662" stroke="#0c480c" stroke-width="1.0"/>
<path d="M275.28 479.15H283.18V484.76H275.28Z" fill="#92f662" stroke="#0c480c" stroke-width="1.0"/>
<line x1="275.28" y1="482.18" x2="283.18" y2="482.18" stroke="#0c480c" stroke-width="1.0"/>
<line x1="298.29" y1="446.73" x2="298.29" y2="453.85" stroke="#2e2e2e" stroke-width="1"/>
<path d="M296.34 448.55H300.24V453.39H296.34Z" fill="#92f662" stroke="#0c480c" stroke-width="1.0"/>
<path d="M294.34 450.37H302.24V452.64H294.34Z" fill="#92f662" stroke="#0c480c" stroke-width="1.0"/>
<line x1="294.34" y1="451.88" x2="302.24" y2="451.88" stroke="#0c480c" stroke-width="1.0"/>
<line x1="317.35" y1="449.76" x2="317.35" y2="468.85" stroke="#2e2e2e" stroke-width="1"/>
<path d="M315.40 454.76H319.30V467.94H315.40Z" fill="#92f662" stroke="#0c480c" stroke-width="1.0"/>
<path d="M313.40 457.94H321.30V464.00H313.40Z" fill="#92f662" stroke="#0c480c" stroke-width="1.0"/>
<line x1="313.40" y1="460.97" x2="321.30" y2="460.97" stroke="#0c480c" stroke-width="1.0"/>
<line x1="336.41" y1="450.37" x2="336.41" y2="479.15" stroke="#2e2e2e" stroke-width="1"/>
<path d="M334.46 458.70H338.36V473.85H334.46Z" fill="#92f662" stroke="#0c480c" stroke-width="1.0"/>
<path d="M332.46 461.42H340.36V470.21H332.46Z" fill="#92f662" stroke="#0c480c" stroke-width="1.0"/>
<line x1="332.46" y1="465.36" x2="340.36" y2="465.36" stroke="#0c480c" stroke-width="1.0"/>
<line x1="355.47" y1="447.34" x2="355.47" y2="464.00" stroke="#2e2e2e" stroke-width="1"/>
<path d="M353.52 450.82H357.42V457.33H353.52Z" fill="#92f662" stroke="#0c480c" stroke-width="1.0"/>
<path d="M351.52 451.88H359.42V455.67H351.52Z" fill="#92f662" stroke="#0c480c" stroke-width="1.0"/>
<line x1="351.52" y1="453.85" x2="359.42" y2="453.85" stroke="#0c480c" stroke-width="1.0"/>
<line x1="374.52" y1="443.24" x2="374.52" y2="458.70" stroke="#2e2e2e" stroke-width="1"/>
<path d="M372.57 446.73H376.47V454.76H372.57Z" fill="#92f662" stroke="#0c480c" stroke-width="1.0"/>
<path d="M370.57 448.09H378.47V452.64H370.57Z" fill="#92f662" stroke="#0c480c" stroke-width="1.0"/>
<line x1="370.57" y1="450.37" x2="378.47" y2="450.37" stroke="#0c480c" stroke-width="1.0"/>
<line x1="393.58" y1="445.06" x2="393.58" y2="476.27" stroke="#2e2e2e" stroke-width="1"/>
<path d="M391.63 454.46H395.53V472.33H391.63Z" fill="#92f662" stroke="#0c480c" stroke-width="1.0"/>
<path d="M389.63 458.70H397.53V469.15H389.63Z" fill="#92f662" stroke="#0c480c" stroke-width="1.0"/>
<line x1="389.63" y1="463.55" x2="397.53" y2="463.55" stroke="#0c480c" stroke-width="1.0"/>
<line x1="412.64" y1="448.55" x2="412.64" y2="486.88" stroke="#2e2e2e" stroke-width="1"/>
<path d="M410.69 449.46H414.59V482.18H410.69Z" fill="#92f662" stroke="#0c480c" stroke-width="1.0"/>
<path d="M408.69 455.67H416.59V476.88H408.69Z" fill="#92f662" stroke="#0c480c" stroke-width="1.0"/>
<line x1="408.69" y1="466.27" x2="416.59" y2="466.27" stroke="#0c480c" stroke-width="1.0"/>
<line x1="431.70" y1="453.85" x2="431.70" y2="488.24" stroke="#2e2e2e" stroke-width="1"/>
<path d="M429.75 456.12H433.65V463.55H429.75Z" fill="#92f662" stroke="#0c480c" stroke-width="1.0"/>
<path d="M427.75 457.18H435.65V461.73H427.75Z" fill="#92f662" stroke="#0c480c" stroke-width="1.0"/>
<line x1="427.75" y1="458.70" x2="435.65" y2="458.70" stroke="#0c480c" stroke-width="1.0"/>
<line x1="450.76" y1="453.39" x2="450.76" y2="462.64" stroke="#2e2e2e" stroke-width="1"/>
<path d="M448.81 454.76H452.71V460.97H448.81Z" fill="#92f662" stroke="#0c480c" stroke-width="1.0"/>
<path d="M446.81 456.43H454.71V459.46H446.81Z" fill="#92f662" stroke="#0c480c" stroke-width="1.0"/>
<line x1="446.81" y1="457.64" x2="454.71" y2="457.64" stroke="#0c480c" stroke-width="1.0"/>
<line x1="469.82" y1="448.55" x2="469.82" y2="477.63" stroke="#2e2e2e" stroke-width="1"/>
<path d="M467.87 454.76H471.77V472.33H467.87Z" fill="#92f662" stroke="#0c480c" stroke-width="1.0"/>
<path d="M465.87 457.33H473.77V464.45H465.87Z" fill="#92f662" stroke="#0c480c" stroke-width="1.0"/>
<line x1="465.87" y1="461.88" x2="473.77" y2="461.88" stroke="#0c480c" stroke-width="1.0"/>
<line x1="488.88" y1="432.64" x2="488.88" y2="483.85" stroke="#2e2e2e" stroke-width="1"/>
<path d="M486.93 441.58H490.83V472.33H486.93Z" fill="#92f662" stroke="#0c480c" stroke-width="1.0"/>
<path d="M484.93 453.39H492.83V467.48H484.93Z" fill="#92f662" stroke="#0c480c" stroke-width="1.0"/>
<line x1="484.93" y1="463.24" x2="492.83" y2="463.24" stroke="#0c480c" stroke-width="1.0"/>
<line x1="507.93" y1="443.85" x2="507.93" y2="462.64" stroke="#2e2e2e" stroke-width="1"/>
<path d="M505.98 448.55H509.88V459.76H505.98Z" fill="#92f662" stroke="#0c480c" stroke-width="1.0"/>
<path d="M503.98 451.12H511.88V457.18H503.98Z" fill="#92f662" stroke="#0c480c" stroke-width="1.0"/>
<line x1="503.98" y1="454.76" x2="511.88" y2="454.76" stroke="#0c480c" stroke-width="1.0"/>
<line x1="526.99" y1="446.73" x2="526.99" y2="462.64" stroke="#2e2e2e" stroke-width="1"/>
<path d="M525.04 449.46H528.94V460.06H525.04Z" fill="#92f662" stroke="#0c480c" stroke-width="1.0"/>
<path d="M523.04 451.88H530.94V458.70H523.04Z" fill="#92f662" stroke="#0c480c" stroke-width="1.0"/>
<line x1="523.04" y1="455.67" x2="530.94" y2="455.67" stroke="#0c480c" stroke-width="1.0"/>
<line x1="546.05" y1="447.64" x2="546.05" y2="482.94" stroke="#2e2e2e" stroke-width="1"/>
<path d="M544.10 448.55H548.00V468.55H544.10Z" fill="#92f662" stroke="#0c480c" stroke-width="1.0"/>
<path d="M542.10 452.94H550.00V463.55H542.10Z" fill="#92f662" stroke="#0c480c" stroke-width="1.0"/>
<line x1="542.10" y1="458.24" x2="550.00" y2="458.24" stroke="#0c480c" stroke-width="1.0"/>
<line x1="565.11" y1="434.46" x2="565.11" y2="476.88" stroke="#2e2e2e" stroke-width="1"/>
<path d="M563.16 443.24H567.06V464.00H563.16Z" fill="#92f662" stroke="#0c480c" stroke-width="1.0"/>
<path d="M561.16 448.55H569.06V458.70H561.16Z" fill="#92f662" stroke="#0c480c" stroke-width="1.0"/>
<line x1="561.16" y1="453.85" x2="569.06" y2="453.85" stroke="#0c480c" stroke-width="1.0"/>
<line x1="584.17" y1="439.76" x2="584.17" y2="469.76" stroke="#2e2e2e" stroke-width="1"/>
<path d="M582.22 444.15H586.12V462.64H582.22Z" fill="#92f662" stroke="#0c480c" stroke-width="1.0"/>
<path d="M580.22 445.06H588.12V449.46H580.22Z" fill="#92f662" stroke="#0c480c" stroke-width="1.0"/>
<line x1="580.22" y1="447.34" x2="588.12" y2="447.34" stroke="#0c480c" stroke-width="1.0"/>
<line x1="603.23" y1="436.28" x2="603.23" y2="462.64" stroke="#2e2e2e" stroke-width="1"/>
<path d="M601.28 437.03H605.18V456.58H601.28Z" fill="#92f662" stroke="#0c480c" stroke-width="1.0"/>
<path d="M599.28 442.79H607.18V453.85H599.28Z" fill="#92f662" stroke="#0c480c" stroke-width="1.0"/>
<line x1="599.28" y1="447.64" x2="607.18" y2="447.64" stroke="#0c480c" stroke-width="1.0"/>
<line x1="622.29" y1="384.16" x2="622.29" y2="467.48" stroke="#2e2e2e" stroke-width="1"/>
<path d="M620.34 444.15H624.24V461.42H620.34Z" fill="#92f662" stroke="#0c480c" stroke-width="1.0"/>
<path d="M618.34 448.55H626.24V459.15H618.34Z" fill="#92f662" stroke="#0c480c" stroke-width="1.0"/>
<line x1="618.34" y1="453.39" x2="626.24" y2="453.39" stroke="#0c480c" stroke-width="1.0"/>
<line x1="641.34" y1="415.07" x2="641.34" y2="472.03" stroke="#2e2e2e" stroke-width="1"/>
<path d="M639.39 432.64H643.29V464.00H639.39Z" fill="#92f662" stroke="#0c480c" stroke-width="1.0"/>
<path d="M637.39 438.85H645.29V455.67H637.39Z" fill="#92f662" stroke="#0c480c" stroke-width="1.0"/>
<line x1="637.39" y1="448.55" x2="645.29" y2="448.55" stroke="#0c480c" stroke-width="1.0"/>
<line x1="660.40" y1="442.34" x2="660.40" y2="470.67" stroke="#2e2e2e" stroke-width="1"/>
<path d="M658.45 445.06H662.35V459.15H658.45Z" fill="#92f662" stroke="#0c480c" stroke-width="1.0"/>
<path d="M656.45 449.15H664.35V454.76H656.45Z" fill="#92f662" stroke="#0c480c" stroke-width="1.0"/>
<line x1="656.45" y1="452.03" x2="664.35" y2="452.03" stroke="#0c480c" stroke-width="1.0"/>
<line x1="679.46" y1="430.97" x2="679.46" y2="460.36" stroke="#2e2e2e" stroke-width="1"/>
<path d="M677.51 440.21H681.41V459.76H677.51Z" fill="#92f662" stroke="#0c480c" stroke-width="1.0"/>
<path d="M675.51 443.24H683.41V456.58H675.51Z" fill="#92f662" stroke="#0c480c" stroke-width="1.0"/>
<line x1="675.51" y1="449.46" x2="683.41" y2="449.46" stroke="#0c480c" stroke-width="1.0"/>
<line x1="698.52" y1="438.55" x2="698.52" y2="471.57" stroke="#2e2e2e" stroke-width="1"/>
<path d="M696.57 445.52H700.47V467.48H696.57Z" fill="#92f662" stroke="#0c480c" stroke-width="1.0"/>
<path d="M694.57 451.27H702.47V463.55H694.57Z" fill="#92f662" stroke="#0c480c" stroke-width="1.0"/>
<line x1="694.57" y1="457.33" x2="702.47" y2="457.33" stroke="#0c480c" stroke-width="1.0"/>
<line x1="717.58" y1="425.06" x2="717.58" y2="467.94" stroke="#2e2e2e" stroke-width="1"/>
<path d="M715.63 434.91H719.53V464.45H715.63Z" fill="#92f662" stroke="#0c480c" stroke-width="1.0"/>
<path d="M713.63 442.34H721.53V458.24H713.63Z" fill="#92f662" stroke="#0c480c" stroke-width="1.0"/>
<line x1="713.63" y1="449.46" x2="721.53" y2="449.46" stroke="#0c480c" stroke-width="1.0"/>
<line x1="736.64" y1="440.21" x2="736.64" y2="485.66" stroke="#2e2e2e" stroke-width="1"/>
<path d="M734.69 443.24H738.59V461.88H734.69Z" fill="#92f662" stroke="#0c480c" stroke-width="1.0"/>
<path d="M732.69 446.73H740.59V455.67H732.69Z" fill="#92f662" stroke="#0c480c" stroke-width="1.0"/>
<line x1="732.69" y1="452.03" x2="740.59" y2="452.03" stroke="#0c480c" stroke-width="1.0"/>
<line x1="755.70" y1="442.34" x2="755.70" y2="468.55" stroke="#2e2e2e" stroke-width="1"/>
<path d="M753.75 448.09H757.65V461.42H753.75Z" fill="#92f662" stroke="#0c480c" stroke-width="1.0"/>
<path d="M751.75 451.27H759.65V458.24H751.75Z" fill="#92f662" stroke="#0c480c" stroke-width="1.0"/>
<line x1="751.75" y1="454.76" x2="759.65" y2="454.76" stroke="#0c480c" stroke-width="1.0"/>
<line x1="774.75" y1="442.79" x2="774.75" y2="479.76" stroke="#2e2e2e" stroke-width="1"/>
<path d="M772.80 448.09H776.70V470.67H772.80Z" fill="#92f662" stroke="#0c480c" stroke-width="1.0"/>
<path d="M770.80 452.64H778.70V465.36H770.80Z" fill="#92f662" stroke="#0c480c" stroke-width="1.0"/>
<line x1="770.80" y1="458.24" x2="778.70" y2="458.24" stroke="#0c480c" stroke-width="1.0"/>
<line x1="793.81" y1="431.43" x2="793.81" y2="466.73" stroke="#2e2e2e" stroke-width="1"/>
<path d="M791.86 439.15H795.76V458.70H791.86Z" fill="#92f662" stroke="#0c480c" stroke-width="1.0"/>
<path d="M789.86 445.06H797.76V455.67H789.86Z" fill="#92f662" stroke="#0c480c" stroke-width="1.0"/>
<line x1="789.86" y1="449.76" x2="797.76" y2="449.76" stroke="#0c480c" stroke-width="1.0"/>
<line x1="812.87" y1="442.79" x2="812.87" y2="464.45" stroke="#2e2e2e" stroke-width="1"/>
<path d="M810.92 444.15H814.82V457.33H810.92Z" fill="#92f662" stroke="#0c480c" stroke-width="1.0"/>
<path d="M808.92 447.34H816.82V454.46H808.92Z" fill="#92f662" stroke="#0c480c" stroke-width="1.0"/>
<line x1="808.92" y1="450.82" x2="816.82" y2="450.82" stroke="#0c480c" stroke-width="1.0"/>
<polyline points="50.53,440.67 69.59,465.06 88.65,467.03 107.70,462.64 126.76,456.12 145.82,461.42 164.88,459.15 183.94,456.88 203.00,460.06 222.06,453.39 241.11,461.42 260.17,460.97 279.23,480.36 298.29,454.46 317.35,473.24 336.41,460.06 355.47,457.33 374.52,452.03 393.58,460.06 412.64,476.27 431.70,461.42 450.76,457.94 469.82,462.64 488.88,464.00 507.93,454.76 526.99,457.94 546.05,461.42 565.11,465.06 584.17,445.52 603.23,439.15 622.29,444.15 641.34,440.21 660.40,444.15 679.46,449.15 698.52,467.48 717.58,450.37 736.64,452.03 755.70,456.88 774.75,463.55 793.81,452.94 812.87,450.37" fill="none" stroke="#d82028" stroke-width="1.5" stroke-linejoin="round"/>
<polyline points="50.53,440.67 69.59,465.06 88.65,473.24 107.70,454.15 126.76,453.39 145.82,463.24 164.88,465.36 183.94,454.76 203.00,460.97 222.06,454.46 241.11,457.94 260.17,460.97 279.23,480.82 298.29,452.03 317.35,460.97 336.41,464.45 355.47,453.39 374.52,450.82 393.58,462.64 412.64,465.36 431.70,459.15 450.76,457.33 469.82,461.42 488.88,460.06 507.93,453.85 526.99,454.76 546.05,458.24 565.11,453.39 584.17,449.46 603.23,446.73 622.29,450.37 641.34,448.09 660.40,451.27 679.46,449.15 698.52,456.12 717.58,449.46 736.64,452.64 755.70,454.76 774.75,458.24 793.81,449.76 812.87,450.82" fill="none" stroke="#1e1cd0" stroke-width="1.5" stroke-linejoin="round"/>
<rect x="41.00" y="379.20" width="781.40" height="115.60" fill="none" stroke="#1a1a1a" stroke-width="1.3"/>
<line x1="36.30" y1="494.30" x2="41.00" y2="494.30" stroke="#1a1a1a" stroke-width="1.1"/>
<text x="24.58" y="498.20" font-size="10.82" textLength="6.42" lengthAdjust="spacingAndGlyphs">0</text>
<line x1="36.30" y1="464.00" x2="41.00" y2="464.00" stroke="#1a1a1a" stroke-width="1.1"/>
<text x="24.25" y="467.90" font-size="10.82" textLength="7.28" lengthAdjust="spacingAndGlyphs">2</text>
<line x1="36.30" y1="433.70" x2="41.00" y2="433.70" stroke="#1a1a1a" stroke-width="1.1"/>
<text x="24.19" y="437.60" font-size="10.82" textLength="7.21" lengthAdjust="spacingAndGlyphs">4</text>
<line x1="36.30" y1="403.40" x2="41.00" y2="403.40" stroke="#1a1a1a" stroke-width="1.1"/>
<text x="24.41" y="407.30" font-size="10.82" textLength="6.93" lengthAdjust="spacingAndGlyphs">6</text>
<line x1="50.53" y1="494.80" x2="50.53" y2="499.60" stroke="#1a1a1a" stroke-width="1.1"/>
<line x1="126.76" y1="494.80" x2="126.76" y2="499.60" stroke="#1a1a1a" stroke-width="1.1"/>
<line x1="203.00" y1="494.80" x2="203.00" y2="499.60" stroke="#1a1a1a" stroke-width="1.1"/>
<line x1="279.23" y1="494.80" x2="279.23" y2="499.60" stroke="#1a1a1a" stroke-width="1.1"/>
<line x1="355.47" y1="494.80" x2="355.47" y2="499.60" stroke="#1a1a1a" stroke-width="1.1"/>
<line x1="431.70" y1="494.80" x2="431.70" y2="499.60" stroke="#1a1a1a" stroke-width="1.1"/>
<line x1="507.93" y1="494.80" x2="507.93" y2="499.60" stroke="#1a1a1a" stroke-width="1.1"/>
<line x1="584.17" y1="494.80" x2="584.17" y2="499.60" stroke="#1a1a1a" stroke-width="1.1"/>
<line x1="660.40" y1="494.80" x2="660.40" y2="499.60" stroke="#1a1a1a" stroke-width="1.1"/>
<line x1="736.64" y1="494.80" x2="736.64" y2="499.60" stroke="#1a1a1a" stroke-width="1.1"/>
<line x1="812.87" y1="494.80" x2="812.87" y2="499.60" stroke="#1a1a1a" stroke-width="1.1"/>
<text x="40.68" y="516.61" font-size="12.81" textLength="127.82" lengthAdjust="spacingAndGlyphs">2m temperature (°C)</text>
<line x1="50.53" y1="521.45" x2="50.53" y2="637.05" stroke="#d8d8d8" stroke-width="0.8" stroke-dasharray="2.6,1.3"/>
<line x1="126.76" y1="521.45" x2="126.76" y2="637.05" stroke="#d8d8d8" stroke-width="0.8" stroke-dasharray="2.6,1.3"/>
<line x1="203.00" y1="521.45" x2="203.00" y2="637.05" stroke="#d8d8d8" stroke-width="0.8" stroke-dasharray="2.6,1.3"/>
<line x1="279.23" y1="521.45" x2="279.23" y2="637.05" stroke="#d8d8d8" stroke-width="0.8" stroke-dasharray="2.6,1.3"/>
<line x1="355.47" y1="521.45" x2="355.47" y2="637.05" stroke="#d8d8d8" stroke-width="0.8" stroke-dasharray="2.6,1.3"/>
<line x1="431.70" y1="521.45" x2="431.70" y2="637.05" stroke="#d8d8d8" stroke-width="0.8" stroke-dasharray="2.6,1.3"/>
<line x1="507.93" y1="521.45" x2="507.93" y2="637.05" stroke="#d8d8d8" stroke-width="0.8" stroke-dasharray="2.6,1.3"/>
<line x1="584.17" y1="521.45" x2="584.17" y2="637.05" stroke="#d8d8d8" stroke-width="0.8" stroke-dasharray="2.6,1.3"/>
<line x1="660.40" y1="521.45" x2="660.40" y2="637.05" stroke="#d8d8d8" stroke-width="0.8" stroke-dasharray="2.6,1.3"/>
<line x1="736.64" y1="521.45" x2="736.64" y2="637.05" stroke="#d8d8d8" stroke-width="0.8" stroke-dasharray="2.6,1.3"/>
<line x1="812.87" y1="521.45" x2="812.87" y2="637.05" stroke="#d8d8d8" stroke-width="0.8" stroke-dasharray="2.6,1.3"/>
<line x1="41.00" y1="629.30" x2="822.40" y2="629.30" stroke="#d8d8d8" stroke-width="0.8" stroke-dasharray="2.6,1.3"/>
<line x1="41.00" y1="587.65" x2="822.40" y2="587.65" stroke="#d8d8d8" stroke-width="0.8" stroke-dasharray="2.6,1.3"/>
<line x1="41.00" y1="546.00" x2="822.40" y2="546.00" stroke="#d8d8d8" stroke-width="0.8" stroke-dasharray="2.6,1.3"/>
<line x1="50.53" y1="631.05" x2="50.53" y2="631.05" stroke="#2e2e2e" stroke-width="1"/>
<path d="M48.58 631.05H52.48V631.05H48.58Z" fill="#92f662" stroke="#0c480c" stroke-width="1.0"/>
<path d="M46.58 631.05H54.48V631.05H46.58Z" fill="#92f662" stroke="#0c480c" stroke-width="1.0"/>
<line x1="46.58" y1="631.05" x2="54.48" y2="631.05" stroke="#0c480c" stroke-width="1.0"/>
<line x1="46.28" y1="631.05" x2="54.78" y2="631.05" stroke="#222" stroke-width="1.1"/>
<line x1="69.59" y1="568.24" x2="69.59" y2="569.91" stroke="#2e2e2e" stroke-width="1"/>
<path d="M67.64 568.49H71.54V569.66H67.64Z" fill="#92f662" stroke="#0c480c" stroke-width="1.0"/>
<path d="M65.64 568.78H73.54V569.37H65.64Z" fill="#92f662" stroke="#0c480c" stroke-width="1.0"/>
<line x1="65.64" y1="569.07" x2="73.54" y2="569.07" stroke="#0c480c" stroke-width="1.0"/>
<line x1="88.65" y1="595.15" x2="88.65" y2="597.15" stroke="#2e2e2e" stroke-width="1"/>
<path d="M86.70 595.45H90.60V596.85H86.70Z" fill="#92f662" stroke="#0c480c" stroke-width="1.0"/>
<path d="M84.70 595.80H92.60V596.50H84.70Z" fill="#92f662" stroke="#0c480c" stroke-width="1.0"/>
<line x1="84.70" y1="596.15" x2="92.60" y2="596.15" stroke="#0c480c" stroke-width="1.0"/>
<line x1="107.70" y1="609.31" x2="107.70" y2="618.47" stroke="#2e2e2e" stroke-width="1"/>
<path d="M105.75 610.72H109.65V616.89H105.75Z" fill="#92f662" stroke="#0c480c" stroke-width="1.0"/>
<path d="M103.75 612.64H111.65V615.97H103.75Z" fill="#92f662" stroke="#0c480c" stroke-width="1.0"/>
<line x1="103.75" y1="614.31" x2="111.65" y2="614.31" stroke="#0c480c" stroke-width="1.0"/>
<line x1="126.76" y1="621.80" x2="126.76" y2="624.47" stroke="#2e2e2e" stroke-width="1"/>
<path d="M124.81 622.20H128.71V624.07H124.81Z" fill="#92f662" stroke="#0c480c" stroke-width="1.0"/>
<path d="M122.81 622.67H130.71V623.60H122.81Z" fill="#92f662" stroke="#0c480c" stroke-width="1.0"/>
<line x1="122.81" y1="623.14" x2="130.71" y2="623.14" stroke="#0c480c" stroke-width="1.0"/>
<line x1="145.82" y1="557.91" x2="145.82" y2="559.91" stroke="#2e2e2e" stroke-width="1"/>
<path d="M143.87 558.21H147.77V559.61H143.87Z" fill="#92f662" stroke="#0c480c" stroke-width="1.0"/>
<path d="M141.87 558.56H149.77V559.26H141.87Z" fill="#92f662" stroke="#0c480c" stroke-width="1.0"/>
<line x1="141.87" y1="558.91" x2="149.77" y2="558.91" stroke="#0c480c" stroke-width="1.0"/>
<line x1="164.88" y1="582.65" x2="164.88" y2="590.98" stroke="#2e2e2e" stroke-width="1"/>
<path d="M162.93 585.15H166.83V589.32H162.93Z" fill="#92f662" stroke="#0c480c" stroke-width="1.0"/>
<path d="M160.93 586.40H168.83V588.07H160.93Z" fill="#92f662" stroke="#0c480c" stroke-width="1.0"/>
<line x1="160.93" y1="587.23" x2="168.83" y2="587.23" stroke="#0c480c" stroke-width="1.0"/>
<line x1="183.94" y1="610.14" x2="183.94" y2="615.14" stroke="#2e2e2e" stroke-width="1"/>
<path d="M181.99 610.97H185.89V614.31H181.99Z" fill="#92f662" stroke="#0c480c" stroke-width="1.0"/>
<path d="M179.99 611.81H187.89V613.47H179.99Z" fill="#92f662" stroke="#0c480c" stroke-width="1.0"/>
<line x1="179.99" y1="612.64" x2="187.89" y2="612.64" stroke="#0c480c" stroke-width="1.0"/>
<line x1="203.00" y1="618.47" x2="203.00" y2="625.13" stroke="#2e2e2e" stroke-width="1"/>
<path d="M201.05 620.14H204.95V623.47H201.05Z" fill="#92f662" stroke="#0c480c" stroke-width="1.0"/>
<path d="M199.05 620.97H206.95V622.64H199.05Z" fill="#92f662" stroke="#0c480c" stroke-width="1.0"/>
<line x1="199.05" y1="621.80" x2="206.95" y2="621.80" stroke="#0c480c" stroke-width="1.0"/>
<line x1="222.06" y1="554.75" x2="222.06" y2="558.49" stroke="#2e2e2e" stroke-width="1"/>
<path d="M220.11 555.58H224.01V557.66H220.11Z" fill="#92f662" stroke="#0c480c" stroke-width="1.0"/>
<path d="M218.11 556.00H226.01V557.25H218.11Z" fill="#92f662" stroke="#0c480c" stroke-width="1.0"/>
<line x1="218.11" y1="556.66" x2="226.01" y2="556.66" stroke="#0c480c" stroke-width="1.0"/>
<line x1="241.11" y1="575.15" x2="241.11" y2="589.32" stroke="#2e2e2e" stroke-width="1"/>
<path d="M239.16 575.99H243.06V588.48H239.16Z" fill="#92f662" stroke="#0c480c" stroke-width="1.0"/>
<path d="M237.16 580.15H245.06V585.15H237.16Z" fill="#92f662" stroke="#0c480c" stroke-width="1.0"/>
<line x1="237.16" y1="582.32" x2="245.06" y2="582.32" stroke="#0c480c" stroke-width="1.0"/>
<line x1="260.17" y1="611.81" x2="260.17" y2="615.97" stroke="#2e2e2e" stroke-width="1"/>
<path d="M258.22 612.64H262.12V615.14H258.22Z" fill="#92f662" stroke="#0c480c" stroke-width="1.0"/>
<path d="M256.22 613.06H264.12V614.31H256.22Z" fill="#92f662" stroke="#0c480c" stroke-width="1.0"/>
<line x1="256.22" y1="613.89" x2="264.12" y2="613.89" stroke="#0c480c" stroke-width="1.0"/>
<line x1="279.23" y1="613.47" x2="279.23" y2="621.80" stroke="#2e2e2e" stroke-width="1"/>
<path d="M277.28 615.97H281.18V620.14H277.28Z" fill="#92f662" stroke="#0c480c" stroke-width="1.0"/>
<path d="M275.28 616.80H283.18V618.89H275.28Z" fill="#92f662" stroke="#0c480c" stroke-width="1.0"/>
<line x1="275.28" y1="617.80" x2="283.18" y2="617.80" stroke="#0c480c" stroke-width="1.0"/>
<line x1="298.29" y1="544.75" x2="298.29" y2="548.50" stroke="#2e2e2e" stroke-width="1"/>
<path d="M296.34 545.58H300.24V547.67H296.34Z" fill="#92f662" stroke="#0c480c" stroke-width="1.0"/>
<path d="M294.34 546.00H302.24V547.00H294.34Z" fill="#92f662" stroke="#0c480c" stroke-width="1.0"/>
<line x1="294.34" y1="546.50" x2="302.24" y2="546.50" stroke="#0c480c" stroke-width="1.0"/>
<line x1="317.35" y1="575.99" x2="317.35" y2="582.65" stroke="#2e2e2e" stroke-width="1"/>
<path d="M315.40 576.82H319.30V580.99H315.40Z" fill="#92f662" stroke="#0c480c" stroke-width="1.0"/>
<path d="M313.40 578.07H321.30V580.15H313.40Z" fill="#92f662" stroke="#0c480c" stroke-width="1.0"/>
<line x1="313.40" y1="579.32" x2="321.30" y2="579.32" stroke="#0c480c" stroke-width="1.0"/>
<line x1="336.41" y1="597.40" x2="336.41" y2="616.39" stroke="#2e2e2e" stroke-width="1"/>
<path d="M334.46 605.39H338.36V612.47H334.46Z" fill="#92f662" stroke="#0c480c" stroke-width="1.0"/>
<path d="M332.46 606.81H340.36V610.97H332.46Z" fill="#92f662" stroke="#0c480c" stroke-width="1.0"/>
<line x1="332.46" y1="608.89" x2="340.36" y2="608.89" stroke="#0c480c" stroke-width="1.0"/>
<line x1="355.47" y1="612.64" x2="355.47" y2="619.30" stroke="#2e2e2e" stroke-width="1"/>
<path d="M353.52 613.47H357.42V618.47H353.52Z" fill="#92f662" stroke="#0c480c" stroke-width="1.0"/>
<path d="M351.52 614.72H359.42V617.22H351.52Z" fill="#92f662" stroke="#0c480c" stroke-width="1.0"/>
<line x1="351.52" y1="615.97" x2="359.42" y2="615.97" stroke="#0c480c" stroke-width="1.0"/>
<line x1="374.52" y1="538.92" x2="374.52" y2="544.33" stroke="#2e2e2e" stroke-width="1"/>
<path d="M372.57 540.17H376.47V543.08H372.57Z" fill="#92f662" stroke="#0c480c" stroke-width="1.0"/>
<path d="M370.57 541.00H378.47V542.25H370.57Z" fill="#92f662" stroke="#0c480c" stroke-width="1.0"/>
<line x1="370.57" y1="541.59" x2="378.47" y2="541.59" stroke="#0c480c" stroke-width="1.0"/>
<line x1="393.58" y1="555.75" x2="393.58" y2="575.24" stroke="#2e2e2e" stroke-width="1"/>
<path d="M391.63 561.91H395.53V570.82H391.63Z" fill="#92f662" stroke="#0c480c" stroke-width="1.0"/>
<path d="M389.63 563.91H397.53V568.49H389.63Z" fill="#92f662" stroke="#0c480c" stroke-width="1.0"/>
<line x1="389.63" y1="565.99" x2="397.53" y2="565.99" stroke="#0c480c" stroke-width="1.0"/>
<line x1="412.64" y1="596.48" x2="412.64" y2="623.14" stroke="#2e2e2e" stroke-width="1"/>
<path d="M410.69 602.73H414.59V616.89H410.69Z" fill="#92f662" stroke="#0c480c" stroke-width="1.0"/>
<path d="M408.69 608.06H416.59V614.31H408.69Z" fill="#92f662" stroke="#0c480c" stroke-width="1.0"/>
<line x1="408.69" y1="611.81" x2="416.59" y2="611.81" stroke="#0c480c" stroke-width="1.0"/>
<line x1="431.70" y1="613.47" x2="431.70" y2="622.64" stroke="#2e2e2e" stroke-width="1"/>
<path d="M429.75 615.97H433.65V620.97H429.75Z" fill="#92f662" stroke="#0c480c" stroke-width="1.0"/>
<path d="M427.75 617.22H435.65V619.72H427.75Z" fill="#92f662" stroke="#0c480c" stroke-width="1.0"/>
<line x1="427.75" y1="618.64" x2="435.65" y2="618.64" stroke="#0c480c" stroke-width="1.0"/>
<line x1="450.76" y1="537.25" x2="450.76" y2="543.50" stroke="#2e2e2e" stroke-width="1"/>
<path d="M448.81 539.34H452.71V542.67H448.81Z" fill="#92f662" stroke="#0c480c" stroke-width="1.0"/>
<path d="M446.81 540.59H454.71V541.83H446.81Z" fill="#92f662" stroke="#0c480c" stroke-width="1.0"/>
<line x1="446.81" y1="541.42" x2="454.71" y2="541.42" stroke="#0c480c" stroke-width="1.0"/>
<line x1="469.82" y1="559.33" x2="469.82" y2="574.32" stroke="#2e2e2e" stroke-width="1"/>
<path d="M467.87 562.83H471.77V572.66H467.87Z" fill="#92f662" stroke="#0c480c" stroke-width="1.0"/>
<path d="M465.87 564.74H473.77V569.32H465.87Z" fill="#92f662" stroke="#0c480c" stroke-width="1.0"/>
<line x1="465.87" y1="566.82" x2="473.77" y2="566.82" stroke="#0c480c" stroke-width="1.0"/>
<line x1="488.88" y1="592.98" x2="488.88" y2="610.72" stroke="#2e2e2e" stroke-width="1"/>
<path d="M486.93 595.98H490.83V607.64H486.93Z" fill="#92f662" stroke="#0c480c" stroke-width="1.0"/>
<path d="M484.93 599.31H492.83V604.31H484.93Z" fill="#92f662" stroke="#0c480c" stroke-width="1.0"/>
<line x1="484.93" y1="601.81" x2="492.83" y2="601.81" stroke="#0c480c" stroke-width="1.0"/>
<line x1="507.93" y1="611.81" x2="507.93" y2="616.80" stroke="#2e2e2e" stroke-width="1"/>
<path d="M505.98 612.64H509.88V615.97H505.98Z" fill="#92f662" stroke="#0c480c" stroke-width="1.0"/>
<path d="M503.98 613.47H511.88V615.14H503.98Z" fill="#92f662" stroke="#0c480c" stroke-width="1.0"/>
<line x1="503.98" y1="614.31" x2="511.88" y2="614.31" stroke="#0c480c" stroke-width="1.0"/>
<line x1="526.99" y1="530.17" x2="526.99" y2="541.83" stroke="#2e2e2e" stroke-width="1"/>
<path d="M525.04 531.84H528.94V540.67H525.04Z" fill="#92f662" stroke="#0c480c" stroke-width="1.0"/>
<path d="M523.04 536.00H530.94V539.34H523.04Z" fill="#92f662" stroke="#0c480c" stroke-width="1.0"/>
<line x1="523.04" y1="538.09" x2="530.94" y2="538.09" stroke="#0c480c" stroke-width="1.0"/>
<line x1="546.05" y1="548.67" x2="546.05" y2="570.82" stroke="#2e2e2e" stroke-width="1"/>
<path d="M544.10 554.83H548.00V566.41H544.10Z" fill="#92f662" stroke="#0c480c" stroke-width="1.0"/>
<path d="M542.10 560.16H550.00V564.74H542.10Z" fill="#92f662" stroke="#0c480c" stroke-width="1.0"/>
<line x1="542.10" y1="561.83" x2="550.00" y2="561.83" stroke="#0c480c" stroke-width="1.0"/>
<line x1="565.11" y1="585.90" x2="565.11" y2="615.14" stroke="#2e2e2e" stroke-width="1"/>
<path d="M563.16 587.65H567.06V601.81H563.16Z" fill="#92f662" stroke="#0c480c" stroke-width="1.0"/>
<path d="M561.16 593.81H569.06V600.14H561.16Z" fill="#92f662" stroke="#0c480c" stroke-width="1.0"/>
<line x1="561.16" y1="597.65" x2="569.06" y2="597.65" stroke="#0c480c" stroke-width="1.0"/>
<line x1="584.17" y1="601.81" x2="584.17" y2="619.55" stroke="#2e2e2e" stroke-width="1"/>
<path d="M582.22 608.06H586.12V614.31H582.22Z" fill="#92f662" stroke="#0c480c" stroke-width="1.0"/>
<path d="M580.22 608.89H588.12V611.81H580.22Z" fill="#92f662" stroke="#0c480c" stroke-width="1.0"/>
<line x1="580.22" y1="610.14" x2="588.12" y2="610.14" stroke="#0c480c" stroke-width="1.0"/>
<line x1="603.23" y1="527.42" x2="603.23" y2="546.00" stroke="#2e2e2e" stroke-width="1"/>
<path d="M601.28 529.76H605.18V538.50H601.28Z" fill="#92f662" stroke="#0c480c" stroke-width="1.0"/>
<path d="M599.28 532.67H607.18V536.84H599.28Z" fill="#92f662" stroke="#0c480c" stroke-width="1.0"/>
<line x1="599.28" y1="534.34" x2="607.18" y2="534.34" stroke="#0c480c" stroke-width="1.0"/>
<line x1="622.29" y1="551.33" x2="622.29" y2="593.81" stroke="#2e2e2e" stroke-width="1"/>
<path d="M620.34 554.00H624.24V570.24H620.34Z" fill="#92f662" stroke="#0c480c" stroke-width="1.0"/>
<path d="M618.34 558.41H626.24V564.99H618.34Z" fill="#92f662" stroke="#0c480c" stroke-width="1.0"/>
<line x1="618.34" y1="560.99" x2="626.24" y2="560.99" stroke="#0c480c" stroke-width="1.0"/>
<line x1="641.34" y1="582.65" x2="641.34" y2="618.14" stroke="#2e2e2e" stroke-width="1"/>
<path d="M639.39 586.73H643.29V612.14H639.39Z" fill="#92f662" stroke="#0c480c" stroke-width="1.0"/>
<path d="M637.39 596.15H645.29V607.14H637.39Z" fill="#92f662" stroke="#0c480c" stroke-width="1.0"/>
<line x1="637.39" y1="601.81" x2="645.29" y2="601.81" stroke="#0c480c" stroke-width="1.0"/>
<line x1="660.40" y1="606.23" x2="660.40" y2="625.72" stroke="#2e2e2e" stroke-width="1"/>
<path d="M658.45 609.81H662.35V617.39H658.45Z" fill="#92f662" stroke="#0c480c" stroke-width="1.0"/>
<path d="M656.45 610.97H664.35V614.31H656.45Z" fill="#92f662" stroke="#0c480c" stroke-width="1.0"/>
<line x1="656.45" y1="611.81" x2="664.35" y2="611.81" stroke="#0c480c" stroke-width="1.0"/>
<line x1="679.46" y1="527.42" x2="679.46" y2="560.16" stroke="#2e2e2e" stroke-width="1"/>
<path d="M677.51 531.01H681.41V542.42H677.51Z" fill="#92f662" stroke="#0c480c" stroke-width="1.0"/>
<path d="M675.51 534.34H683.41V540.17H675.51Z" fill="#92f662" stroke="#0c480c" stroke-width="1.0"/>
<line x1="675.51" y1="537.67" x2="683.41" y2="537.67" stroke="#0c480c" stroke-width="1.0"/>
<line x1="698.52" y1="551.33" x2="698.52" y2="593.31" stroke="#2e2e2e" stroke-width="1"/>
<path d="M696.57 556.66H700.47V570.82H696.57Z" fill="#92f662" stroke="#0c480c" stroke-width="1.0"/>
<path d="M694.57 561.08H702.47V569.07H694.57Z" fill="#92f662" stroke="#0c480c" stroke-width="1.0"/>
<line x1="694.57" y1="565.99" x2="702.47" y2="565.99" stroke="#0c480c" stroke-width="1.0"/>
<line x1="717.58" y1="584.48" x2="717.58" y2="614.31" stroke="#2e2e2e" stroke-width="1"/>
<path d="M715.63 587.65H719.53V608.06H715.63Z" fill="#92f662" stroke="#0c480c" stroke-width="1.0"/>
<path d="M713.63 590.32H721.53V600.39H713.63Z" fill="#92f662" stroke="#0c480c" stroke-width="1.0"/>
<line x1="713.63" y1="595.98" x2="721.53" y2="595.98" stroke="#0c480c" stroke-width="1.0"/>
<line x1="736.64" y1="601.98" x2="736.64" y2="617.80" stroke="#2e2e2e" stroke-width="1"/>
<path d="M734.69 606.89H738.59V614.31H734.69Z" fill="#92f662" stroke="#0c480c" stroke-width="1.0"/>
<path d="M732.69 608.47H740.59V611.81H732.69Z" fill="#92f662" stroke="#0c480c" stroke-width="1.0"/>
<line x1="732.69" y1="609.72" x2="740.59" y2="609.72" stroke="#0c480c" stroke-width="1.0"/>
<line x1="755.70" y1="526.09" x2="755.70" y2="561.33" stroke="#2e2e2e" stroke-width="1"/>
<path d="M753.75 530.51H757.65V550.41H753.75Z" fill="#92f662" stroke="#0c480c" stroke-width="1.0"/>
<path d="M751.75 533.09H759.65V541.92H751.75Z" fill="#92f662" stroke="#0c480c" stroke-width="1.0"/>
<line x1="751.75" y1="536.84" x2="759.65" y2="536.84" stroke="#0c480c" stroke-width="1.0"/>
<line x1="774.75" y1="546.33" x2="774.75" y2="579.90" stroke="#2e2e2e" stroke-width="1"/>
<path d="M772.80 552.16H776.70V573.74H772.80Z" fill="#92f662" stroke="#0c480c" stroke-width="1.0"/>
<path d="M770.80 555.16H778.70V567.49H770.80Z" fill="#92f662" stroke="#0c480c" stroke-width="1.0"/>
<line x1="770.80" y1="561.83" x2="778.70" y2="561.83" stroke="#0c480c" stroke-width="1.0"/>
<line x1="793.81" y1="578.99" x2="793.81" y2="610.39" stroke="#2e2e2e" stroke-width="1"/>
<path d="M791.86 583.98H795.76V600.56H791.86Z" fill="#92f662" stroke="#0c480c" stroke-width="1.0"/>
<path d="M789.86 586.98H797.76V594.56H789.86Z" fill="#92f662" stroke="#0c480c" stroke-width="1.0"/>
<line x1="789.86" y1="590.98" x2="797.76" y2="590.98" stroke="#0c480c" stroke-width="1.0"/>
<line x1="812.87" y1="602.81" x2="812.87" y2="614.31" stroke="#2e2e2e" stroke-width="1"/>
<path d="M810.92 604.06H814.82V612.56H810.92Z" fill="#92f662" stroke="#0c480c" stroke-width="1.0"/>
<path d="M808.92 606.39H816.82V609.31H808.92Z" fill="#92f662" stroke="#0c480c" stroke-width="1.0"/>
<line x1="808.92" y1="607.64" x2="816.82" y2="607.64" stroke="#0c480c" stroke-width="1.0"/>
<polyline points="50.53,631.05 69.59,569.07 88.65,596.15 107.70,618.14 126.76,622.22 145.82,558.49 164.88,585.98 183.94,605.39 203.00,613.47 222.06,555.41 241.11,581.49 260.17,610.72 279.23,615.14 298.29,546.00 317.35,578.82 336.41,606.23 355.47,616.89 374.52,542.42 393.58,565.99 412.64,612.14 431.70,615.97 450.76,540.17 469.82,560.99 488.88,600.39 507.93,612.14 526.99,535.34 546.05,560.99 565.11,600.06 584.17,608.06 603.23,531.26 622.29,552.16 641.34,599.15 660.40,610.31 679.46,543.67 698.52,566.41 717.58,594.73 736.64,609.89 755.70,535.75 774.75,560.49 793.81,590.48 812.87,607.23" fill="none" stroke="#d82028" stroke-width="1.5" stroke-linejoin="round"/>
<polyline points="50.53,631.05 69.59,569.07 88.65,596.15 107.70,615.14 126.76,623.14 145.82,558.91 164.88,587.32 183.94,612.47 203.00,621.72 222.06,556.66 241.11,582.32 260.17,613.89 279.23,617.80 298.29,546.50 317.35,579.15 336.41,608.89 355.47,615.64 374.52,541.59 393.58,565.99 412.64,611.56 431.70,618.64 450.76,541.59 469.82,566.74 488.88,601.81 507.93,614.31 526.99,538.42 546.05,561.41 565.11,597.90 584.17,609.81 603.23,534.50 622.29,554.83 641.34,599.15 660.40,610.72 679.46,541.59 698.52,565.49 717.58,596.48 736.64,609.39 755.70,536.67 774.75,561.33 793.81,590.98 812.87,607.23" fill="none" stroke="#1e1cd0" stroke-width="1.5" stroke-linejoin="round"/>
<rect x="41.00" y="521.45" width="781.40" height="115.60" fill="none" stroke="#1a1a1a" stroke-width="1.3"/>
<line x1="36.30" y1="629.30" x2="41.00" y2="629.30" stroke="#1a1a1a" stroke-width="1.1"/>
<text x="17.67" y="633.20" font-size="10.82" textLength="13.55" lengthAdjust="spacingAndGlyphs">25</text>
<line x1="36.30" y1="587.65" x2="41.00" y2="587.65" stroke="#1a1a1a" stroke-width="1.1"/>
<text x="17.62" y="591.55" font-size="10.82" textLength="13.52" lengthAdjust="spacingAndGlyphs">30</text>
<line x1="36.30" y1="546.00" x2="41.00" y2="546.00" stroke="#1a1a1a" stroke-width="1.1"/>
<text x="17.66" y="549.90" font-size="10.82" textLength="13.58" lengthAdjust="spacingAndGlyphs">35</text>
<line x1="50.53" y1="637.05" x2="50.53" y2="641.85" stroke="#1a1a1a" stroke-width="1.1"/>
<line x1="126.76" y1="637.05" x2="126.76" y2="641.85" stroke="#1a1a1a" stroke-width="1.1"/>
<line x1="203.00" y1="637.05" x2="203.00" y2="641.85" stroke="#1a1a1a" stroke-width="1.1"/>
<line x1="279.23" y1="637.05" x2="279.23" y2="641.85" stroke="#1a1a1a" stroke-width="1.1"/>
<line x1="355.47" y1="637.05" x2="355.47" y2="641.85" stroke="#1a1a1a" stroke-width="1.1"/>
<line x1="431.70" y1="637.05" x2="431.70" y2="641.85" stroke="#1a1a1a" stroke-width="1.1"/>
<line x1="507.93" y1="637.05" x2="507.93" y2="641.85" stroke="#1a1a1a" stroke-width="1.1"/>
<line x1="584.17" y1="637.05" x2="584.17" y2="641.85" stroke="#1a1a1a" stroke-width="1.1"/>
<line x1="660.40" y1="637.05" x2="660.40" y2="641.85" stroke="#1a1a1a" stroke-width="1.1"/>
<line x1="736.64" y1="637.05" x2="736.64" y2="641.85" stroke="#1a1a1a" stroke-width="1.1"/>
<line x1="812.87" y1="637.05" x2="812.87" y2="641.85" stroke="#1a1a1a" stroke-width="1.1"/>
<text x="40.21" y="654.60" font-size="10.82" textLength="20.73" lengthAdjust="spacingAndGlyphs">00Z</text>
<text x="33.44" y="666.80" font-size="10.82" textLength="33.96" lengthAdjust="spacingAndGlyphs">14Mar</text>
<text x="116.55" y="654.60" font-size="10.82" textLength="20.76" lengthAdjust="spacingAndGlyphs">00Z</text>
<text x="109.31" y="666.80" font-size="10.82" textLength="34.21" lengthAdjust="spacingAndGlyphs">15Mar</text>
<text x="193.00" y="654.60" font-size="10.82" textLength="20.57" lengthAdjust="spacingAndGlyphs">00Z</text>
<text x="185.79" y="666.80" font-size="10.82" textLength="33.89" lengthAdjust="spacingAndGlyphs">16Mar</text>
<text x="269.22" y="654.60" font-size="10.82" textLength="20.25" lengthAdjust="spacingAndGlyphs">00Z</text>
<text x="261.94" y="666.80" font-size="10.82" textLength="33.76" lengthAdjust="spacingAndGlyphs">17Mar</text>
<text x="345.27" y="654.60" font-size="10.82" textLength="20.73" lengthAdjust="spacingAndGlyphs">00Z</text>
<text x="338.15" y="666.80" font-size="10.82" textLength="33.92" lengthAdjust="spacingAndGlyphs">18Mar</text>
<text x="421.53" y="654.60" font-size="10.82" textLength="20.70" lengthAdjust="spacingAndGlyphs">00Z</text>
<text x="414.23" y="666.80" font-size="10.82" textLength="33.96" lengthAdjust="spacingAndGlyphs">19Mar</text>
<text x="497.81" y="654.60" font-size="10.82" textLength="20.31" lengthAdjust="spacingAndGlyphs">00Z</text>
<text x="491.19" y="666.80" font-size="10.82" textLength="34.07" lengthAdjust="spacingAndGlyphs">20Mar</text>
<text x="573.88" y="654.60" font-size="10.82" textLength="20.83" lengthAdjust="spacingAndGlyphs">00Z</text>
<text x="567.11" y="666.80" font-size="10.82" textLength="34.16" lengthAdjust="spacingAndGlyphs">21Mar</text>
<text x="650.09" y="654.60" font-size="10.82" textLength="20.78" lengthAdjust="spacingAndGlyphs">00Z</text>
<text x="643.50" y="666.80" font-size="10.82" textLength="34.09" lengthAdjust="spacingAndGlyphs">22Mar</text>
<text x="726.46" y="654.60" font-size="10.82" textLength="20.60" lengthAdjust="spacingAndGlyphs">00Z</text>
<text x="719.77" y="666.80" font-size="10.82" textLength="34.00" lengthAdjust="spacingAndGlyphs">23Mar</text>
<text x="802.82" y="654.60" font-size="10.82" textLength="20.51" lengthAdjust="spacingAndGlyphs">00Z</text>
<text x="796.09" y="666.80" font-size="10.82" textLength="33.78" lengthAdjust="spacingAndGlyphs">24Mar</text>
</svg></body></html>
